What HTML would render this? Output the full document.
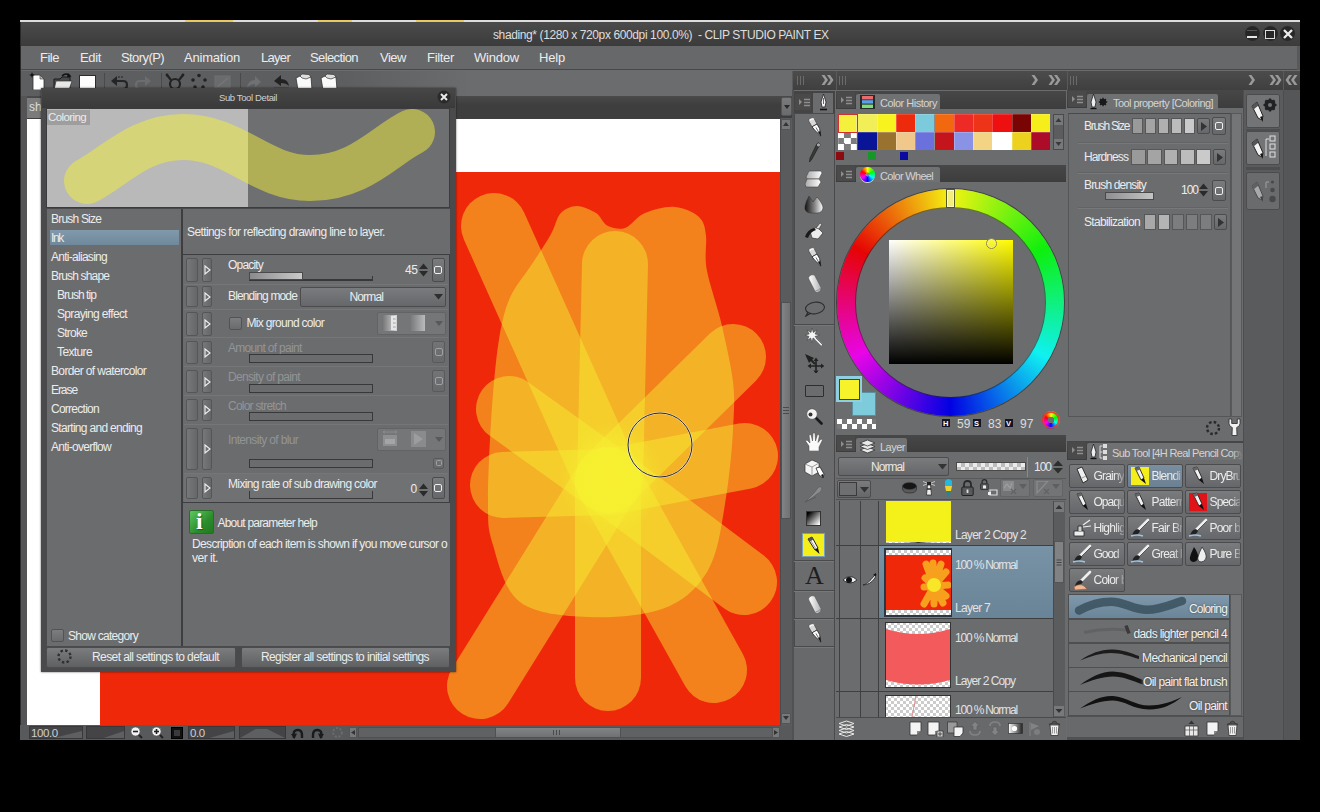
<!DOCTYPE html>
<html><head><meta charset="utf-8"><title>CLIP STUDIO PAINT EX</title>
<style>
*{box-sizing:border-box;margin:0;padding:0}
html,body{width:1320px;height:812px;background:#000;overflow:hidden}
body{font-family:"Liberation Sans",sans-serif;color:#e6e6e6;font-size:12px;position:relative}
.a{position:absolute}
.t{position:absolute;white-space:nowrap;line-height:1}
#win{left:20px;top:20px;width:1280px;height:720px;background:#6b6c6e;overflow:hidden}
#o{left:-20px;top:-20px;width:1320px;height:812px}
.btn{position:absolute;background:linear-gradient(#7a7b7d,#66676a);border:1px solid #4c4c4e;border-radius:2px}
.hdr{position:absolute;background:linear-gradient(#474747,#3d3d3d)}
.tab{position:absolute;background:#707173;border-radius:2px 2px 0 0}

</style></head><body>
<div id="win" class="a"><div id="o" class="a">
<div class="a" style="left:20px;top:20px;width:1280px;height:2px;background:#dcdcdc"></div>
<div class="a" style="left:185px;top:20px;width:48px;height:2px;background:#e8c860"></div>
<div class="a" style="left:318px;top:20px;width:34px;height:2px;background:#e8c860"></div>
<div class="a" style="left:416px;top:20px;width:48px;height:2px;background:#e8c860"></div>
<div class="a" style="left:20px;top:22px;width:1280px;height:24px;background:linear-gradient(#4b4b4b,#3b3b3b)"></div>
<div class="t" style="left:493px;top:29px;font-size:12px;color:#dedede;letter-spacing:-0.39px;">shading* (1280 x 720px 600dpi 100.0%)&nbsp; - CLIP STUDIO PAINT EX</div>
<div class="a" style="left:20px;top:46px;width:1280px;height:24px;background:#67686a;border-bottom:1px solid #48484a"></div>
<div class="t" style="left:40px;top:51px;font-size:13px;color:#ececec;letter-spacing:-0.49px;">File</div>
<div class="t" style="left:80px;top:51px;font-size:13px;color:#ececec;letter-spacing:-0.35px;">Edit</div>
<div class="t" style="left:121px;top:51px;font-size:13px;color:#ececec;letter-spacing:-0.58px;">Story(P)</div>
<div class="t" style="left:184px;top:51px;font-size:13px;color:#ececec;letter-spacing:-0.20px;">Animation</div>
<div class="t" style="left:261px;top:51px;font-size:13px;color:#ececec;letter-spacing:-0.70px;">Layer</div>
<div class="t" style="left:310px;top:51px;font-size:13px;color:#ececec;letter-spacing:-0.61px;">Selection</div>
<div class="t" style="left:380px;top:51px;font-size:13px;color:#ececec;letter-spacing:-0.49px;">View</div>
<div class="t" style="left:427px;top:51px;font-size:13px;color:#ececec;letter-spacing:-0.31px;">Filter</div>
<div class="t" style="left:474px;top:51px;font-size:13px;color:#ececec;letter-spacing:-0.21px;">Window</div>
<div class="t" style="left:539px;top:51px;font-size:13px;color:#ececec;letter-spacing:-0.18px;">Help</div>
<div class="a" style="left:20px;top:70px;width:1280px;height:26px;background:#6b6c6e"></div>
<div class="a" style="left:20px;top:71px;width:320px;height:25px;background:#5d5e60"></div>
<div class="a" style="left:340px;top:71px;width:130px;height:25px;background:linear-gradient(90deg,#5d5e60,#6b6c6e)"></div>
<svg class="a" style="left:29px;top:72px;opacity:1" width="18" height="18" viewBox="0 0 18 18"><path d="M4,3 L11,3 L15,7 L15,18 L4,18Z" fill="#fff" stroke="#333" stroke-width=".8"/><path d="M11,3 L11,7 L15,7Z" fill="#bbb" stroke="#333" stroke-width=".6"/><path d="M3,0 L3.8,2.2 L6,3 L3.8,3.8 L3,6 L2.2,3.8 L0,3 L2.2,2.2Z" fill="#111"/></svg>
<svg class="a" style="left:53px;top:73px;opacity:1" width="20" height="17" viewBox="0 0 20 17"><path d="M1,6 L7,6 L9,4 L17,4 L17,17 L1,17Z" fill="#4a4a4a" stroke="#1a1a1a"/><path d="M3,8 L19,8 L16,17 L1,17Z" fill="#e8e8e8" stroke="#333" stroke-width=".7"/><path d="M9,3 Q13,-1 17,3" stroke="#111" stroke-width="1.6" fill="none"/><path d="M15,0 L18.5,3.5 L14,4.5Z" fill="#111"/></svg>
<div class="a" style="left:79px;top:75px;width:17px;height:18px;background:#fdfdfd;border:1.5px solid #2c2c2c"></div>
<div class="a" style="left:104px;top:73px;width:1px;height:22px;background:#4a4a4c"></div>
<svg class="a" style="left:110px;top:75px;opacity:1" width="19" height="15" viewBox="0 0 19 15"><path d="M5,6 L13,6 Q17,6 17,10 Q17,14 13,14 L5,14" fill="none" stroke="#252525" stroke-width="2.2"/><path d="M7,1 L1,6 L7,11Z" fill="#252525"/><path d="M8,2h2M11,2h2" stroke="#252525" stroke-width="1"/></svg>
<svg class="a" style="left:134px;top:76px;opacity:1" width="18" height="14" viewBox="0 0 18 14"><path d="M13,5 L6,5 Q2,5 2,9 Q2,13 6,13 L13,13" fill="none" stroke="#6c6d6f" stroke-width="2.2"/><path d="M11,0 L17,5 L11,10Z" fill="#6c6d6f"/></svg>
<div class="a" style="left:161px;top:73px;width:1px;height:22px;background:#4a4a4c"></div>
<svg class="a" style="left:165px;top:73px;opacity:1" width="20" height="17" viewBox="0 0 20 17"><circle cx="10" cy="11" r="5" fill="none" stroke="#222" stroke-width="2.2"/><path d="M6,7 L2,2 M14,7 L18,2" stroke="#222" stroke-width="2.2"/><circle cx="2" cy="2" r="1.4" fill="#222"/><circle cx="18" cy="2" r="1.4" fill="#222"/></svg>
<svg class="a" style="left:190px;top:73px;opacity:1" width="18" height="17" viewBox="0 0 18 17"><g fill="#222"><circle cx="9" cy="2.5" r="1.8"/><circle cx="3" cy="7" r="1.8"/><circle cx="15" cy="7" r="1.8"/><circle cx="5" cy="14" r="1.8"/><circle cx="13" cy="14" r="1.8"/></g></svg>
<svg class="a" style="left:214px;top:75px;opacity:1" width="17" height="15" viewBox="0 0 17 15"><rect x="1" y="1" width="15" height="13" fill="#6a6b6d" stroke="#707173"/><path d="M3,12 L14,3" stroke="#757678" stroke-width="1.5"/></svg>
<div class="a" style="left:240px;top:73px;width:1px;height:22px;background:#4a4a4c"></div>
<svg class="a" style="left:245px;top:74px;opacity:1" width="17" height="15" viewBox="0 0 17 15"><path d="M2,14 Q3,6 10,6 L10,2 L16,8 L10,13 L10,10 Q5,10 2,14Z" fill="#707173"/></svg>
<svg class="a" style="left:272px;top:73px;opacity:1" width="19" height="17" viewBox="0 0 19 17"><path d="M17,13 Q16,6 9,6 L9,2 L2,8 L9,13 L9,10 Q14,10 17,13Z" fill="#222"/><path d="M2,15.5h15" stroke="#222" stroke-width="1.4"/></svg>
<svg class="a" style="left:294px;top:73px;opacity:1" width="20" height="17" viewBox="0 0 20 17"><path d="M2,5 L6,3 L17,4 L18,17 L4,17Z" fill="#fafafa" stroke="#333" stroke-width=".8"/><path d="M6,3 L8,1 L15,1.5 L17,4 L12,6 L8,5Z" fill="#ddd" stroke="#333" stroke-width=".7"/></svg>
<svg class="a" style="left:319px;top:73px;opacity:1" width="20" height="17" viewBox="0 0 20 17"><path d="M2,5 L6,3 L17,4 L18,17 L4,17Z" fill="#fafafa" stroke="#333" stroke-width=".8"/><path d="M6,3 L8,1 L15,1.5 L17,4 L12,6 L8,5Z" fill="#ddd" stroke="#333" stroke-width=".7"/></svg>
<div class="a" style="left:1244.5px;top:26px;width:15px;height:15px;border-radius:50%;background:radial-gradient(circle,#262626 60%,#333 100%)"></div>
<div class="a" style="left:1262.5px;top:26px;width:15px;height:15px;border-radius:50%;background:radial-gradient(circle,#262626 60%,#333 100%)"></div>
<div class="a" style="left:1280px;top:26px;width:15px;height:15px;border-radius:50%;background:radial-gradient(circle,#262626 60%,#333 100%)"></div>
<div class="a" style="left:1247px;top:35.5px;width:10px;height:2.5px;background:#e4e4e4"></div>
<div class="a" style="left:1247px;top:30px;width:10px;height:1px;background:#555"></div>
<div class="a" style="left:1265px;top:29.5px;width:10px;height:9.5px;border:1.7px solid #dcdcdc"></div>
<svg class="a" style="left:1283px;top:29px" width="10" height="10" viewBox="0 0 10 10"><path d="M1,1 L9,9 M9,1 L1,9" stroke="#ececec" stroke-width="2.3"/></svg>
<div class="a" style="left:1297px;top:46px;width:3px;height:694px;background:#58595b"></div>
<div class="a" style="left:20px;top:96px;width:772px;height:23px;background:linear-gradient(#4a4a4a,#3e3e3e 40%)"></div>
<div class="a" style="left:26px;top:98px;width:17px;height:20px;background:#7b7b7b"></div>
<div class="t" style="left:29px;top:101px;font-size:12px;color:#ddd;">sh</div>
<div class="a" style="left:20px;top:22px;width:1px;height:718px;background:#2a2a2a"></div>
<div class="a" style="left:21px;top:96px;width:6px;height:644px;background:#545456"></div>
<div class="a" style="left:27px;top:119px;width:753px;height:607px;background:#fff;overflow:hidden">
  <svg class="a" style="left:0;top:0" width="753" height="607" viewBox="27 119 753 607">
    <rect x="100" y="172" width="680" height="560" fill="#f0280a"/>
    <path fill="#f6f032" fill-opacity="0.45" d="M551,234 C556,225 556,219 560,214 C564,209 571,206 577,206 C583,206 591,210 596,213 C601,216 603,224 608,226 C613,228 619,230 625,228 C631,226 637,216 645,213 C653,210 666,206 675,207 C684,208 694,212 699,217 C704,222 705,227 706,236 C707,245 704,256 707,271 C710,286 718,308 722,326 C726,344 731,365 733,382 C735,399 734,410 733,430 C732,450 729,480 725,504 C721,528 718,554 707,572 C696,590 682,602 662,609 C642,616 612,618 588,617 C564,616 536,614 520,602 C504,590 498,562 493,545 C488,528 488,527 488,500 C488,473 491,414 494,382 C497,350 500,327 506,308 C512,289 522,279 530,267 C538,255 546,243 551,234Z"/>
    <g fill="none" stroke="#f6f032" stroke-opacity="0.45" stroke-width="66" stroke-linecap="round" stroke-linejoin="round">
      <path d="M494,226 L608,480"/>
      <path d="M615,264 L610,480"/>
      <path d="M733,357 L608,480"/>
      <path d="M509,409 L608,480"/>
      <path d="M503,485 L608,482 L745,456"/>
      <path d="M480,686 L608,480"/>
      <path d="M608,678 L608,480"/>
      <path d="M714,670 L608,480"/>
      <path d="M744,582 L608,480"/>
    </g>
    <defs><radialGradient id="glow"><stop offset="0" stop-color="#f8f030" stop-opacity=".75"/><stop offset=".5" stop-color="#f8f030" stop-opacity=".4"/><stop offset="1" stop-color="#f8f030" stop-opacity="0"/></radialGradient></defs>
    <ellipse cx="611" cy="478" rx="52" ry="56" fill="url(#glow)"/>
    <circle cx="660" cy="445" r="32" fill="none" stroke="#fff" stroke-opacity=".6" stroke-width="2"/>
    <circle cx="660" cy="445" r="32" fill="none" stroke="#223" stroke-width="1"/>
  </svg>
</div>
<div class="a" style="left:20px;top:725px;width:772px;height:15px;background:#58595b"></div>
<div class="a" style="left:29px;top:726px;width:54px;height:13px;background:#444446;border:1px solid #38383a;overflow:hidden"></div>
<svg class="a" style="left:30px;top:727px" width="52" height="11" viewBox="0 0 52 11"><path d="M23.4,11 L52,4 L52,11Z" fill="#5e5f61"/></svg>
<div class="t" style="left:31px;top:727.5px;font-size:11.5px;color:#cfcfcf;letter-spacing:-0.4px">100.0</div>
<div class="a" style="left:86px;top:726px;width:39px;height:13px;background:#444446;border:1px solid #38383a;overflow:hidden"></div>
<svg class="a" style="left:87px;top:727px" width="37" height="11" viewBox="0 0 37 11"><path d="M16.65,11 L37,4 L37,11Z" fill="#5e5f61"/></svg>
<svg class="a" style="left:130px;top:726px" width="13" height="13" viewBox="0 0 13 13"><path d="M8,8 L12,12" stroke="#222" stroke-width="2"/><circle cx="5.5" cy="5.5" r="4.6" fill="#f2f2f2" stroke="#555" stroke-width=".8"/><path d="M3,5.5h5" stroke="#222" stroke-width="1.6"/></svg>
<svg class="a" style="left:151px;top:726px" width="13" height="13" viewBox="0 0 13 13"><path d="M8,8 L12,12" stroke="#222" stroke-width="2"/><circle cx="5.5" cy="5.5" r="4.6" fill="#f2f2f2" stroke="#555" stroke-width=".8"/><path d="M3,5.5h5" stroke="#222" stroke-width="1.6"/><path d="M5.5,3v5" stroke="#222" stroke-width="1.6"/></svg>
<div class="a" style="left:171px;top:727px;width:12px;height:12px;background:#111;border:1px solid #000"></div>
<div class="a" style="left:174px;top:730px;width:6px;height:6px;background:#3a3a3a"></div>
<div class="a" style="left:188px;top:726px;width:47px;height:13px;background:#444446;border:1px solid #38383a;overflow:hidden"></div>
<svg class="a" style="left:189px;top:727px" width="45" height="11" viewBox="0 0 45 11"><path d="M20.25,11 L45,4 L45,11Z" fill="#5e5f61"/></svg>
<div class="t" style="left:190px;top:727.5px;font-size:11.5px;color:#cfcfcf;letter-spacing:-0.4px">0.0</div>
<div class="a" style="left:239px;top:726px;width:47px;height:13px;background:#444446;border:1px solid #38383a;overflow:hidden"></div>
<svg class="a" style="left:240px;top:727px" width="45" height="11" viewBox="0 0 45 11"><path d="M0,11 L15.75,2 L27,2 L45,11Z" fill="#5e5f61"/></svg>
<svg class="a" style="left:291px;top:727px" width="13" height="12" viewBox="0 0 13 12"><g><path d="M3,11 Q1,3 7,3 Q11,3 11,8 L11,11" fill="none" stroke="#1a1a1a" stroke-width="2.4"/><path d="M0,7 L3.5,12 L6,6.5Z" fill="#1a1a1a"/></g></svg>
<svg class="a" style="left:311px;top:727px" width="13" height="12" viewBox="0 0 13 12"><g transform="translate(13,0) scale(-1,1)"><path d="M3,11 Q1,3 7,3 Q11,3 11,8 L11,11" fill="none" stroke="#1a1a1a" stroke-width="2.4"/><path d="M0,7 L3.5,12 L6,6.5Z" fill="#1a1a1a"/></g></svg>
<svg class="a" style="left:331px;top:726px" width="13" height="13" viewBox="0 0 13 13"><circle cx="6.5" cy="6.5" r="4.4" fill="none" stroke="#6a6b6d" stroke-width="2" stroke-dasharray="2.2 1.5"/></svg>
<div class="a" style="left:349px;top:727px;width:8px;height:11px;background:#77787a;border:1px solid #555"></div>
<svg class="a" style="left:351px;top:730px" width="4" height="5" viewBox="0 0 4 5"><path d="M4,0 L0,2.5 L4,5Z" fill="#333"/></svg>
<div class="a" style="left:358px;top:727px;width:415px;height:11px;background:#606163;border:1px solid #4e4f51"></div>
<div class="a" style="left:495px;top:727px;width:126px;height:11px;background:linear-gradient(#828385,#707173);border:1px solid #505153"></div>
<div class="a" style="left:553px;top:730px;width:7px;height:5px;background:repeating-linear-gradient(90deg,#4a4a4c 0 1px,transparent 1px 3px)"></div>
<div class="a" style="left:772px;top:727px;width:8px;height:11px;background:#77787a;border:1px solid #555"></div>
<svg class="a" style="left:774px;top:730px" width="4" height="5" viewBox="0 0 4 5"><path d="M0,0 L4,2.5 L0,5Z" fill="#333"/></svg>
<div class="a" style="left:780px;top:118px;width:12px;height:608px;background:#5a5b5d;border-left:1px solid #4a4a4c"></div>
<div class="a" style="left:781px;top:119px;width:10px;height:11px;background:#77787a;border:1px solid #555"></div>
<div class="a" style="left:781px;top:713px;width:10px;height:11px;background:#77787a;border:1px solid #555"></div>
<svg class="a" style="left:783px;top:122px" width="6" height="600" viewBox="0 0 6 600"><path d="M0,4 L3,0 L6,4Z M0,594 L3,598 L6,594Z" fill="#333"/></svg>
<div class="a" style="left:781px;top:302px;width:10px;height:217px;background:linear-gradient(90deg,#828385,#707173);border:1px solid #505153"></div>
<div class="a" style="left:783px;top:407px;width:6px;height:7px;background:repeating-linear-gradient(#4a4a4c 0 1px,transparent 1px 3px)"></div>
<div class="a" style="left:781px;top:97px;width:11px;height:19px;background:linear-gradient(#7a7b7d,#6a6b6d);border:1px solid #555;border-radius:2px"></div>
<svg class="a" style="left:783.5px;top:105px" width="6" height="4" viewBox="0 0 6 4"><path d="M0,0 L6,0 L3,4Z" fill="#2a2a2a"/></svg>
<div class="a" style="left:792px;top:70px;width:508px;height:670px;background:#6b6c6e"></div>
<div class="a" style="left:792px;top:71px;width:44px;height:19px;background:linear-gradient(#4c4c4c,#3f3f3f);border-left:1px solid #5a5a5a"></div>
<div class="a" style="left:836px;top:71px;width:231px;height:19px;background:linear-gradient(#4c4c4c,#3f3f3f);border-left:1px solid #5a5a5a"></div>
<div class="a" style="left:1067px;top:71px;width:216px;height:19px;background:linear-gradient(#4c4c4c,#3f3f3f);border-left:1px solid #5a5a5a"></div>
<div class="a" style="left:1283px;top:71px;width:17px;height:19px;background:linear-gradient(#4c4c4c,#3f3f3f);border-left:1px solid #5a5a5a"></div>
<div class="a" style="left:797px;top:76px;width:7px;height:9px;background:repeating-linear-gradient(90deg,#6a6a6a 0 1px,transparent 1px 3px)"></div>
<div class="a" style="left:839px;top:76px;width:7px;height:9px;background:repeating-linear-gradient(90deg,#6a6a6a 0 1px,transparent 1px 3px)"></div>
<div class="a" style="left:1070px;top:76px;width:7px;height:9px;background:repeating-linear-gradient(90deg,#6a6a6a 0 1px,transparent 1px 3px)"></div>
<svg class="a" style="left:821px;top:74px" width="13" height="12" viewBox="0 0 13 12"><g fill="#9a9a9a"><path d="M0.5,1 L4,6 L0.5,11 L3.5,11 L7,6 L3.5,1Z"/><path d="M6,1 L9.5,6 L6,11 L9,11 L12.5,6 L9,1Z"/></g></svg>
<svg class="a" style="left:1031px;top:74px" width="13" height="12" viewBox="0 0 13 12"><g fill="#9a9a9a"><path d="M0.5,1 L4,6 L0.5,11 L3.5,11 L7,6 L3.5,1Z"/></g></svg>
<svg class="a" style="left:1048px;top:74px" width="13" height="12" viewBox="0 0 13 12"><g fill="#9a9a9a"><path d="M0.5,1 L4,6 L0.5,11 L3.5,11 L7,6 L3.5,1Z"/><path d="M6,1 L9.5,6 L6,11 L9,11 L12.5,6 L9,1Z"/></g></svg>
<svg class="a" style="left:1248px;top:74px" width="13" height="12" viewBox="0 0 13 12"><g fill="#9a9a9a"><path d="M0.5,1 L4,6 L0.5,11 L3.5,11 L7,6 L3.5,1Z"/></g></svg>
<svg class="a" style="left:1269px;top:74px" width="13" height="12" viewBox="0 0 13 12"><g fill="#9a9a9a"><path d="M0.5,1 L4,6 L0.5,11 L3.5,11 L7,6 L3.5,1Z"/><path d="M6,1 L9.5,6 L6,11 L9,11 L12.5,6 L9,1Z"/></g></svg>
<svg class="a" style="left:1285px;top:74px" width="13" height="12" viewBox="0 0 13 12"><g fill="#9a9a9a" transform="translate(13,0) scale(-1,1)"><path d="M0.5,1 L4,6 L0.5,11 L3.5,11 L7,6 L3.5,1Z"/><path d="M6,1 L9.5,6 L6,11 L9,11 L12.5,6 L9,1Z"/></g></svg>
<div class="a" style="left:793px;top:91px;width:42px;height:22px;background:#444"></div>
<div class="a" style="left:795px;top:94px;width:16px;height:16px;background:#4a4a4a"></div>
<svg class="a" style="left:799px;top:98px" width="12" height="10" viewBox="0 0 12 10"><path d="M0,1 L3,4 L0,7Z" fill="#8e8e8e"/><path d="M5,1.5h6M5,4.5h6M5,7.5h6" stroke="#8e8e8e" stroke-width="1.3"/></svg>
<div class="a" style="left:813px;top:93px;width:20px;height:20px;background:#6b6c6e"></div>
<div class="a" style="left:794px;top:113px;width:41px;height:627px;background:#6b6c6e;border:1px solid #4a4a4c"></div>
<div class="a" style="left:792px;top:90px;width:2px;height:650px;background:#505153"></div>
<div class="a" style="left:794px;top:324px;width:40px;height:1px;background:#4a4a4c"></div>
<div class="a" style="left:794px;top:325px;width:40px;height:1px;background:#77787a"></div>
<div class="a" style="left:794px;top:560px;width:40px;height:1px;background:#4a4a4c"></div>
<div class="a" style="left:794px;top:561px;width:40px;height:1px;background:#77787a"></div>
<div class="a" style="left:794px;top:590px;width:40px;height:1px;background:#4a4a4c"></div>
<div class="a" style="left:794px;top:591px;width:40px;height:1px;background:#77787a"></div>
<div class="a" style="left:794px;top:618px;width:40px;height:1px;background:#4a4a4c"></div>
<div class="a" style="left:794px;top:619px;width:40px;height:1px;background:#77787a"></div>
<div class="a" style="left:794px;top:646px;width:40px;height:1px;background:#4a4a4c"></div>
<div class="a" style="left:794px;top:647px;width:40px;height:1px;background:#77787a"></div>
<div class="a" style="left:794px;top:648px;width:40px;height:92px;background:#68696b"></div>
<svg class="a" style="left:818px;top:93px;opacity:1" width="11" height="19" viewBox="0 0 11 19"><path d="M5.5,1 L8,9 L7,14 L4,14 L3,9Z" fill="#f4f4f4" stroke="#222" stroke-width=".8"/><path d="M5.5,5v6" stroke="#444" stroke-width=".8"/><path d="M2,16.5h7" stroke="#111" stroke-width="1.6"/></svg>
<svg class="a" style="left:807px;top:117px;opacity:1" width="15" height="20" viewBox="0 0 15 20"><path d="M3,1.2 Q5.5,-0.3 7.3,1.8 L10,7 L5,9.8 L2,4.5 Q1.3,2.3 3,1.2Z" fill="#d8d8d8" stroke="#444" stroke-width=".7"/><path d="M2.6,3.5 Q4.5,1.5 7,2.2" stroke="#fff" stroke-width="1.2" fill="none"/><path d="M5,9.8 L10,7 L12.6,11.5 L13.8,19 L8,13.5Z" fill="#fafafa" stroke="#222" stroke-width=".8"/><path d="M9,10.5 L12.6,17" stroke="#444" stroke-width=".8"/><path d="M11.2,15 L14,19.6 L13.2,14Z" fill="#111"/></svg>
<svg class="a" style="left:807px;top:142px;opacity:1" width="14" height="21" viewBox="0 0 14 21"><path d="M10,1.5 Q12,0 13,2 Q13.5,4 11.5,5 L5,17 L2.5,20 L3,16Z" fill="#3a3a3a" stroke="#1a1a1a" stroke-width=".6"/><circle cx="11.5" cy="2.8" r="1.6" fill="#aaa"/></svg>
<svg class="a" style="left:804px;top:170px;opacity:1" width="19" height="18" viewBox="0 0 19 18"><defs><linearGradient id="g3" x1="0" x2="1"><stop offset="0" stop-color="#aaa"/><stop offset="1" stop-color="#fff"/></linearGradient></defs><path d="M5,1 L17,1 L18,3 L15,9 L3,9 L2,7Z" fill="url(#g3)" stroke="#444" stroke-width=".6"/><path d="M3,9 L15,9 L17,12 L14,17 L2,17 L1,14Z" fill="url(#g3)" stroke="#444" stroke-width=".6"/></svg>
<svg class="a" style="left:804px;top:195px;opacity:1" width="20" height="19" viewBox="0 0 20 19"><defs><linearGradient id="g4" x1="0" x2="1"><stop offset="0" stop-color="#111"/><stop offset=".55" stop-color="#888"/><stop offset="1" stop-color="#fff"/></linearGradient></defs><path d="M5,1 L9,7 L13,2 Q19,9 19,13 Q18,18 13,18 L6,18 Q0,17 1,11 Q2,6 5,1Z" fill="url(#g4)" stroke="#333" stroke-width=".5"/></svg>
<svg class="a" style="left:804px;top:222px;opacity:1" width="20" height="19" viewBox="0 0 20 19"><path d="M6,9 L13,5 L19,11 L14,17 L8,16Z" fill="#ececec" stroke="#333" stroke-width=".7"/><path d="M1,15 Q3,8 10,6 L12,8 Q6,10 4,16Z" fill="#1a1a1a"/><path d="M12,6 L16,1 L18,2 L15,7Z" fill="#ddd" stroke="#333" stroke-width=".6"/></svg>
<svg class="a" style="left:807px;top:247px;opacity:1" width="15" height="20" viewBox="0 0 15 20"><path d="M3,1.2 Q5.5,-0.3 7.3,1.8 L10,7 L5,9.8 L2,4.5 Q1.3,2.3 3,1.2Z" fill="#d8d8d8" stroke="#444" stroke-width=".7"/><path d="M2.6,3.5 Q4.5,1.5 7,2.2" stroke="#fff" stroke-width="1.2" fill="none"/><path d="M5,9.8 L10,7 L12.6,11.5 L13.8,19 L8,13.5Z" fill="#fafafa" stroke="#222" stroke-width=".8"/><path d="M9,10.5 L12.6,17" stroke="#444" stroke-width=".8"/><path d="M11.2,15 L14,19.6 L13.2,14Z" fill="#111"/></svg>
<svg class="a" style="left:807px;top:274px;opacity:1" width="15" height="19" viewBox="0 0 15 19"><defs><linearGradient id="g7" x1="0" x2="1"><stop offset="0" stop-color="#fff"/><stop offset="1" stop-color="#b4b4b4"/></linearGradient></defs><path d="M2.5,2 Q4.5,0 7.5,1 L14,13.5 Q14.5,17 11,18.3 Q9,18.8 8,17.3 L1.8,5 Q1.2,3.2 2.5,2Z" fill="url(#g7)" stroke="#555" stroke-width=".6"/><path d="M8.5,17 Q12.5,16.5 13.8,13.5" stroke="#8a8a8a" stroke-width=".9" fill="none"/></svg>
<svg class="a" style="left:804px;top:301px;opacity:1" width="21" height="16" viewBox="0 0 21 16"><ellipse cx="11" cy="7" rx="9.5" ry="5.8" fill="none" stroke="#2e2e2e" stroke-width="1.1" transform="rotate(-8 11 7)"/><path d="M4,11 L2,15 L7,12" fill="none" stroke="#2a2a2a" stroke-width="1.2"/></svg>
<svg class="a" style="left:805px;top:328px;opacity:1" width="19" height="19" viewBox="0 0 19 19"><path d="M7,0 L8.3,4.5 L12,2 L10,6 L14.5,7 L10,8.5 L12,12.5 L8,10 L7,14.5 L5.7,10 L2,12.5 L4,8.5 L0,7 L4.2,6 L2,2 L6,4.5Z" fill="#f4f4f4" stroke="#333" stroke-width=".5"/><path d="M10,10 L17,17" stroke="#eee" stroke-width="2"/><path d="M11,10 L18,17" stroke="#444" stroke-width=".7"/></svg>
<svg class="a" style="left:804px;top:353px;opacity:1" width="20" height="20" viewBox="0 0 20 20"><path d="M1,1 L10,5 L5,10Z" fill="#222"/><path d="M3,3 L11,11" stroke="#222" stroke-width="2"/><path d="M12,6 L12,20 M5,13 L19,13" stroke="#222" stroke-width="1.6"/><path d="M12,4.5 L14.5,8 L9.5,8Z M12,21 L14.5,17.5 L9.5,17.5Z M3.5,13 L7,10.5 L7,15.5Z M20.5,13 L17,10.5 L17,15.5Z" fill="#222"/></svg>
<div class="a" style="left:805px;top:385px;width:19px;height:12px;border:1.6px solid #2e2e2e;border-radius:1px"></div>
<svg class="a" style="left:806px;top:408px;opacity:1" width="17" height="17" viewBox="0 0 17 17"><path d="M9,9 L15.5,15.5" stroke="#1a1a1a" stroke-width="2.6" stroke-linecap="round"/><circle cx="6" cy="6" r="5.3" fill="#f4f4f4" stroke="#555" stroke-width=".7"/><circle cx="4.5" cy="6.5" r="2" fill="#333"/></svg>
<svg class="a" style="left:805px;top:432px;opacity:1" width="18" height="19" viewBox="0 0 18 19"><path d="M4,19 L4,14 L0.5,9 L2,8 L5,11 L4,3 L6,2.5 L7.5,9 L8,1 L10,1 L10.5,9 L12.5,2.5 L14.5,3 L13,10.5 L16,7 L17.5,8 L14,15 L14,19Z" fill="#fafafa" stroke="#444" stroke-width=".5"/></svg>
<svg class="a" style="left:804px;top:459px;opacity:1" width="21" height="19" viewBox="0 0 21 19"><path d="M1,5 L8,1 L15,4 L15,13 L8,17 L1,13Z" fill="#f4f4f4" stroke="#333" stroke-width=".7"/><path d="M1,5 L8,8 L15,4 M8,8 L8,17" fill="none" stroke="#777" stroke-width=".7"/><path d="M12,9 L16,8 L20,15 L19,19 L15,16Z" fill="#fff" stroke="#222" stroke-width=".8"/><path d="M17,16 L19.5,19.5 L19,15Z" fill="#111"/></svg>
<svg class="a" style="left:804px;top:485px;opacity:0.9" width="19" height="18" viewBox="0 0 19 18"><path d="M1,17 L10,8 L13,4 Q16,0 18,3 Q18,7 13,9 L8,13Z" fill="#8e8f91" stroke="#555" stroke-width=".6"/><path d="M1,17 L12,12" stroke="#555" stroke-width=".8"/></svg>
<div class="a" style="left:806px;top:511px;width:15px;height:15px;background:linear-gradient(135deg,#000 10%,#fff 95%);border:1px solid #333"></div>
<div class="a" style="left:802px;top:533px;width:23px;height:24px;background:#f4ee1a;border:1.5px solid #7aa0b8"></div>
<svg class="a" style="left:806px;top:536px;opacity:1" width="15" height="19" viewBox="0 0 15 19"><path d="M2,3 L6,1 L12,12 L9,14Z" fill="#f8f8f8" stroke="#222" stroke-width="1"/><path d="M9,14 L12,12 L13.5,18Z" fill="#111"/><path d="M2,3 L6,1 L7.4,3.6 L3.5,5.8Z" fill="#555"/><path d="M5,5 L10,13" stroke="#777" stroke-width=".7"/></svg>
<div class="t" style="left:805px;top:563px;font-family:'Liberation Serif',serif;font-size:26px;color:#1e1e1e">A</div>
<svg class="a" style="left:807px;top:595px;opacity:1" width="15" height="19" viewBox="0 0 15 19"><defs><linearGradient id="g7b" x1="0" x2="1"><stop offset="0" stop-color="#fff"/><stop offset="1" stop-color="#b4b4b4"/></linearGradient></defs><path d="M2.5,2 Q4.5,0 7.5,1 L14,13.5 Q14.5,17 11,18.3 Q9,18.8 8,17.3 L1.8,5 Q1.2,3.2 2.5,2Z" fill="url(#g7b)" stroke="#555" stroke-width=".6"/><path d="M8.5,17 Q12.5,16.5 13.8,13.5" stroke="#8a8a8a" stroke-width=".9" fill="none"/></svg>
<svg class="a" style="left:807px;top:623px;opacity:1" width="15" height="20" viewBox="0 0 15 20"><path d="M3,1.2 Q5.5,-0.3 7.3,1.8 L10,7 L5,9.8 L2,4.5 Q1.3,2.3 3,1.2Z" fill="#d8d8d8" stroke="#444" stroke-width=".7"/><path d="M2.6,3.5 Q4.5,1.5 7,2.2" stroke="#fff" stroke-width="1.2" fill="none"/><path d="M5,9.8 L10,7 L12.6,11.5 L13.8,19 L8,13.5Z" fill="#fafafa" stroke="#222" stroke-width=".8"/><path d="M9,10.5 L12.6,17" stroke="#444" stroke-width=".8"/><path d="M11.2,15 L14,19.6 L13.2,14Z" fill="#111"/></svg>
<div class="hdr" style="left:836px;top:91px;width:230px;height:18px;"></div>
<div class="a" style="left:837px;top:92px;width:18px;height:16px;background:#4a4a4a"></div>
<svg class="a" style="left:841px;top:96px" width="12" height="10" viewBox="0 0 12 10"><path d="M0,1 L3,4 L0,7Z" fill="#8e8e8e"/><path d="M5,1.5h6M5,4.5h6M5,7.5h6" stroke="#8e8e8e" stroke-width="1.3"/></svg>
<div class="tab" style="left:856px;top:94px;width:84px;height:15px;"></div>
<svg class="a" style="left:860px;top:95px" width="15" height="14" viewBox="0 0 15 14"><rect width="15" height="14" fill="#2a2a2a"/><rect x="2" y="1" width="11" height="3.4" fill="#e86a6a"/><rect x="2" y="5.2" width="11" height="3.4" fill="#5aa0e8"/><rect x="2" y="9.6" width="11" height="3.4" fill="#7be07b"/></svg>
<div class="t" style="left:880px;top:97.5px;font-size:11px;color:#d4d4d4;letter-spacing:-0.51px;">Color History</div>
<div class="a" style="left:838px;top:114px;width:19.3px;height:18px;background:#f5f03c"></div>
<div class="a" style="left:857.3px;top:114px;width:19.3px;height:18px;background:#f2ee58"></div>
<div class="a" style="left:876.6px;top:114px;width:19.3px;height:18px;background:#f8f21e"></div>
<div class="a" style="left:895.9px;top:114px;width:19.3px;height:18px;background:#ee2a0c"></div>
<div class="a" style="left:915.2px;top:114px;width:19.3px;height:18px;background:#7ccbdc"></div>
<div class="a" style="left:934.5px;top:114px;width:19.3px;height:18px;background:#f2680e"></div>
<div class="a" style="left:953.8px;top:114px;width:19.3px;height:18px;background:#ee2a26"></div>
<div class="a" style="left:973.1px;top:114px;width:19.3px;height:18px;background:#ee3418"></div>
<div class="a" style="left:992.4px;top:114px;width:19.3px;height:18px;background:#ee1010"></div>
<div class="a" style="left:1011.7px;top:114px;width:19.3px;height:18px;background:#780404"></div>
<div class="a" style="left:1031px;top:114px;width:19.3px;height:18px;background:#f6ee1a"></div>
<div class="a" style="left:838px;top:132px;width:19.3px;height:18px;background:#fff conic-gradient(#7c7c7c 25%,#fff 0 50%,#7c7c7c 0 75%,#fff 0) 0 0/12.87px 12px"></div>
<div class="a" style="left:857.3px;top:132px;width:19.3px;height:18px;background:#0a1496"></div>
<div class="a" style="left:876.6px;top:132px;width:19.3px;height:18px;background:#9a7230"></div>
<div class="a" style="left:895.9px;top:132px;width:19.3px;height:18px;background:#f0c88c"></div>
<div class="a" style="left:915.2px;top:132px;width:19.3px;height:18px;background:#6a70dc"></div>
<div class="a" style="left:934.5px;top:132px;width:19.3px;height:18px;background:#c4141c"></div>
<div class="a" style="left:953.8px;top:132px;width:19.3px;height:18px;background:#8a92e6"></div>
<div class="a" style="left:973.1px;top:132px;width:19.3px;height:18px;background:#f2d484"></div>
<div class="a" style="left:992.4px;top:132px;width:19.3px;height:18px;background:#ffffff"></div>
<div class="a" style="left:1011.7px;top:132px;width:19.3px;height:18px;background:#ecd21e"></div>
<div class="a" style="left:1031px;top:132px;width:19.3px;height:18px;background:#ac0c28"></div>
<div class="a" style="left:838px;top:114px;width:212.3px;height:36px;background:repeating-linear-gradient(90deg,rgba(255,255,255,.22) 0 1px,transparent 1px 19.3px);border-top:1px solid rgba(255,255,255,.15)"></div>
<div class="a" style="left:838px;top:131.5px;width:212.3px;height:1px;background:rgba(255,255,255,.2)"></div>
<div class="a" style="left:837.5px;top:113.5px;width:20.5px;height:19px;border:1px solid #d03030;box-shadow:inset 0 0 0 1px #f4e8a0"></div>
<div class="a" style="left:836px;top:152px;width:8px;height:8px;background:#8c0a10"></div>
<div class="a" style="left:868px;top:152px;width:8px;height:8px;background:#18962a"></div>
<div class="a" style="left:900px;top:152px;width:8px;height:8px;background:#0a0aa0"></div>
<div class="a" style="left:1052.5px;top:114px;width:11px;height:36px;background:#5c5c5e;border:1px solid #4a4a4a"></div>
<div class="a" style="left:1053.5px;top:115px;width:9px;height:10px;background:#77787a"></div>
<div class="a" style="left:1053.5px;top:139px;width:9px;height:10px;background:#77787a"></div>
<svg class="a" style="left:1054.5px;top:117px" width="7" height="30" viewBox="0 0 7 30"><path d="M0.5,5 L3.5,1 L6.5,5Z M0.5,25 L3.5,29 L6.5,25Z" fill="#3a3a3a"/></svg>
<div class="hdr" style="left:836px;top:165px;width:230px;height:17px;"></div>
<div class="a" style="left:837px;top:166px;width:18px;height:15px;background:#4a4a4a"></div>
<svg class="a" style="left:841px;top:170px" width="12" height="10" viewBox="0 0 12 10"><path d="M0,1 L3,4 L0,7Z" fill="#8e8e8e"/><path d="M5,1.5h6M5,4.5h6M5,7.5h6" stroke="#8e8e8e" stroke-width="1.3"/></svg>
<div class="tab" style="left:856px;top:167px;width:84px;height:15px;"></div>
<div class="a" style="left:860px;top:167px;width:15px;height:15px;border-radius:50%;background:radial-gradient(circle,#888 0 18%,transparent 20%),conic-gradient(from -60deg,#f00,#ff0,#0f0,#0ff,#00f,#f0f,#f00);box-shadow:0 1px 0 #ddd"></div>
<div class="t" style="left:880px;top:170.5px;font-size:11px;color:#d4d4d4;letter-spacing:-0.68px;">Color Wheel</div>
<div class="a" style="left:837px;top:189px;width:227px;height:227px;border-radius:50%;background:conic-gradient(from -60deg,#f00,#ff0,#0f0,#0ff,#00f,#f0f,#f00);box-shadow:0 0 0 1px rgba(40,40,40,.6);filter:saturate(.92) brightness(.96)"></div>
<div class="a" style="left:856px;top:208px;width:189px;height:189px;border-radius:50%;background:#6b6c6e;box-shadow:0 0 0 1px rgba(40,40,40,.6)"></div>
<div class="a" style="left:889px;top:240px;width:124px;height:124px;background:linear-gradient(to top,#000,rgba(0,0,0,0)),linear-gradient(to right,#fff,#fffb00)"></div>
<div class="a" style="left:946px;top:189px;width:9px;height:19px;background:#f2ee7a;border:1px solid #55552a;box-shadow:inset 0 0 0 1px #fbf8c0"></div>
<div class="a" style="left:986px;top:238px;width:11px;height:11px;border-radius:50%;border:1px solid #8a8a50;box-shadow:inset 0 0 0 1px #f6f2b0"></div>
<div class="a" style="left:852px;top:392px;width:24px;height:24px;background:#7ecbdc;border:1px solid #58929e"></div>
<div class="a" style="left:836px;top:376px;width:26px;height:26px;background:#8fcfe4"></div>
<div class="a" style="left:839px;top:379px;width:21px;height:21px;background:#f8f22a;border:1px solid #44441e"></div>
<div class="a" style="left:837px;top:419px;width:39px;height:10px;background:#fff conic-gradient(#777 25%,#fff 0 50%,#777 0 75%,#fff 0) 0 0/10px 10px"></div>
<div class="a" style="left:942px;top:419px;width:8px;height:8px;background:#141428"></div>
<div class="t" style="left:943px;top:419.5px;font-size:7.5px;color:#fff;font-weight:bold">H</div>
<div class="t" style="left:957px;top:418px;font-size:12px;color:#dcdcdc;">59</div>
<div class="a" style="left:973px;top:419px;width:8px;height:8px;background:#141428"></div>
<div class="t" style="left:974px;top:419.5px;font-size:7.5px;color:#fff;font-weight:bold">S</div>
<div class="t" style="left:988px;top:418px;font-size:12px;color:#dcdcdc;">83</div>
<div class="a" style="left:1005px;top:419px;width:8px;height:8px;background:#141428"></div>
<div class="t" style="left:1006px;top:419.5px;font-size:7.5px;color:#fff;font-weight:bold">V</div>
<div class="t" style="left:1020px;top:418px;font-size:12px;color:#dcdcdc;">97</div>
<div class="a" style="left:1042px;top:411px;width:18px;height:18px;border-radius:50%;background:radial-gradient(circle,#6b6c6e 0 25%,transparent 27%),conic-gradient(from -60deg,#f00,#ff0,#0f0,#0ff,#00f,#f0f,#f00);box-shadow:inset 0 0 0 2px rgba(230,60,40,.9)"></div>
<div class="hdr" style="left:836px;top:435px;width:230px;height:17px;"></div>
<div class="a" style="left:837px;top:436px;width:18px;height:15px;background:#4a4a4a"></div>
<svg class="a" style="left:841px;top:440px" width="12" height="10" viewBox="0 0 12 10"><path d="M0,1 L3,4 L0,7Z" fill="#8e8e8e"/><path d="M5,1.5h6M5,4.5h6M5,7.5h6" stroke="#8e8e8e" stroke-width="1.3"/></svg>
<div class="tab" style="left:856px;top:438px;width:51px;height:14px;"></div>
<svg class="a" style="left:859px;top:438px" width="17" height="16" viewBox="0 0 17 16"><g fill="#e8e8e8" stroke="#333" stroke-width=".8"><path d="M1,12 L8.5,9 L16,12 L8.5,15Z"/><path d="M1,8.5 L8.5,5.5 L16,8.5 L8.5,11.5Z"/><path d="M1,5 L8.5,2 L16,5 L8.5,8Z"/></g></svg>
<div class="t" style="left:880px;top:441.5px;font-size:11px;color:#d4d4d4;letter-spacing:-0.50px;">Layer</div>
<div class="btn" style="left:838px;top:457px;width:111px;height:19px;"></div>
<div class="t" style="left:871px;top:461px;font-size:12px;color:#e8e8e8;letter-spacing:-0.95px;">Normal</div>
<svg class="a" style="left:938px;top:464px" width="9" height="6" viewBox="0 0 9 6"><path d="M0,0 L9,0 L4.5,5.5Z" fill="#333"/></svg>
<div class="a" style="left:956px;top:462px;width:70px;height:9px;background:#e4e4e4 conic-gradient(#bdbdbd 25%,#ececec 0 50%,#bdbdbd 0 75%,#ececec 0) 0 0/8px 8px;border:1px solid #4a4a4a"></div>
<div class="a" style="left:1027px;top:457px;width:1px;height:20px;background:#88898b"></div>
<div class="t" style="left:1034px;top:461px;font-size:12px;color:#e8e8e8;letter-spacing:-1.01px;">100</div>
<svg class="a" style="left:1053px;top:460px" width="10" height="14" viewBox="0 0 10 14"><path d="M0,6 L5,0.5 L10,6Z M0,8 L5,13.5 L10,8Z" fill="#2e2e2e"/></svg>
<div class="a" style="left:836px;top:478px;width:230px;height:1px;background:#58595b"></div>
<div class="btn" style="left:837px;top:480px;width:34px;height:18px;"></div>
<div class="a" style="left:839px;top:482px;width:18px;height:14px;background:#6e6f71;border:1px solid #3a3a3a"></div>
<svg class="a" style="left:860px;top:487px" width="9" height="6" viewBox="0 0 9 6"><path d="M0,0 L9,0 L4.5,5.5Z" fill="#333"/></svg>
<svg class="a" style="left:902px;top:481px;opacity:1" width="15" height="13" viewBox="0 0 15 13"><path d="M0.5,5 L0.5,8 Q1,12 7.5,12 Q14,12 14.5,8 L14.5,5Z" fill="#5a5a5c" stroke="#2a2a2a" stroke-width=".7"/><ellipse cx="7.5" cy="5" rx="7" ry="3.6" fill="#161616" stroke="#444" stroke-width=".6"/></svg>
<svg class="a" style="left:923px;top:480px;opacity:1" width="12" height="16" viewBox="0 0 12 16"><path d="M4.5,5 L7.5,5 L8.5,15 L3.5,15Z" fill="#eee" stroke="#222" stroke-width=".7"/><rect x="4" y="2" width="4" height="3" fill="#222"/><path d="M4,9h4" stroke="#222" stroke-width="1.4"/><path d="M4,3 L0,1.5 M4,4 L0,5.5 M8,3 L12,1.5 M8,4 L12,5.5" stroke="#ddd" stroke-width=".8"/></svg>
<svg class="a" style="left:944px;top:478px;opacity:1" width="9" height="19" viewBox="0 0 9 19"><path d="M1,3 Q4.5,-1 8,3 L8,8 L1,8Z" fill="#22b8e0"/><path d="M1,8 L8,8 L7,13 L2,13Z" fill="#f0d030"/><path d="M2,13 L7,13 L4.5,19Z" fill="#1a8a9a"/></svg>
<svg class="a" style="left:961px;top:480px;opacity:1" width="13" height="16" viewBox="0 0 13 16"><path d="M3,7 L3,4.5 Q3,1 6.5,1 Q10,1 10,4.5 L10,7" fill="none" stroke="#2a2a2a" stroke-width="1.8"/><rect x="0.8" y="7" width="11.4" height="8.5" rx="1" fill="#58595b" stroke="#222" stroke-width="1"/><rect x="5.6" y="9.5" width="1.8" height="3.5" fill="#ddd"/></svg>
<svg class="a" style="left:980px;top:479px;opacity:1" width="18" height="17" viewBox="0 0 18 17"><g transform="scale(.68)"><path d="M3,7 L3,4.5 Q3,1 6.5,1 Q10,1 10,4.5 L10,7" fill="none" stroke="#2a2a2a" stroke-width="1.8"/><rect x="0.8" y="7" width="11.4" height="8.5" rx="1" fill="#58595b" stroke="#222" stroke-width="1"/><rect x="5.6" y="9.5" width="1.8" height="3.5" fill="#ddd"/></g><rect x="3" y="6.5" width="3" height="3" fill="#eee"/><path d="M10,11 h7 v5 h-7Z" fill="none" stroke="#ddd" stroke-width="1.2"/><rect x="8" y="13" width="3" height="3" fill="#eee"/></svg>
<div class="a" style="left:1000px;top:479px;width:30px;height:18px;background:#737476;border:1px solid #636466;border-radius:2px"></div>
<div class="a" style="left:1033px;top:479px;width:30px;height:18px;background:#737476;border:1px solid #636466;border-radius:2px"></div>
<svg class="a" style="left:1003px;top:481px;opacity:1" width="26" height="14" viewBox="0 0 26 14"><rect x="0" y="0" width="11" height="10" fill="#8a8b8d"/><path d="M1,7 L4,3 L7,7 L9,2" stroke="#9c9d9f" stroke-width="1.3" fill="none"/><path d="M8,8 L13,13 M13,8 L8,13" stroke="#626365" stroke-width="1.2"/><path d="M16,3 L24,3 L20,8Z" fill="#5e5f61"/></svg>
<svg class="a" style="left:1036px;top:481px;opacity:1" width="26" height="14" viewBox="0 0 26 14"><path d="M1,0 L12,0 L1,12Z" fill="none" stroke="#8a8b8d" stroke-width="1.3"/><path d="M8,8 L13,13 M13,8 L8,13" stroke="#626365" stroke-width="1.2"/><path d="M16,3 L24,3 L20,8Z" fill="#5e5f61"/></svg>
<div class="a" style="left:836px;top:499px;width:230px;height:1px;background:#4e4f51"></div>
<div class="a" style="left:836px;top:501px;width:217px;height:216px;background:#6b6c6e;overflow:hidden"><!--LL--></div>
<div class="a" style="left:886px;top:501px;width:65px;height:42px;background:#f4f01a;border-bottom:1px solid #333"></div>
<div class="a" style="left:886px;top:539px;width:65px;height:4px;background:#fff conic-gradient(#ccc 25%,#fff 0 50%,#ccc 0 75%,#fff 0) 0 0/6px 6px;clip-path:polygon(0 60%,50% 100%,100% 60%,100% 100%,0 100%)"></div>
<div class="a" style="left:836px;top:545px;width:217px;height:1px;background:#3e3f41"></div>
<div class="t" style="left:955px;top:529px;font-size:12px;color:#e2e2e2;letter-spacing:-0.74px;">Layer 2 Copy 2</div>
<div class="a" style="left:878px;top:546px;width:175px;height:72px;background:linear-gradient(#7893a6,#6a8497)"></div>
<div class="a" style="left:836px;top:618px;width:217px;height:1px;background:#3e3f41"></div>
<div class="t" style="left:955px;top:559px;font-size:12px;color:#e2e2e2;letter-spacing:-1.17px;">100 % Normal</div>
<div class="t" style="left:955px;top:602px;font-size:12px;color:#e2e2e2;letter-spacing:-0.72px;">Layer 7</div>
<div class="a" style="left:884px;top:548px;width:68px;height:69px;background:#2c3640"></div>
<svg class="a" style="left:886px;top:550px" width="65" height="65" viewBox="0 0 65 65"><defs><pattern id="ck" width="6" height="6" patternUnits="userSpaceOnUse"><rect width="6" height="6" fill="#fff"/><rect width="3" height="3" fill="#ccc"/><rect x="3" y="3" width="3" height="3" fill="#ccc"/></pattern></defs><rect width="65" height="65" fill="url(#ck)"/><rect y="5" width="65" height="55" fill="#f0280a"/><g stroke="#f6a01e" stroke-width="7" stroke-linecap="round"><path d="M40,14 L48,36 M47,13 L48,36 M55,14 L48,36 M60,22 L48,36 M39,28 L48,36 M38,37 L62,35 M38,54 L48,36 M48,54 L48,36 M57,53 L48,36 M60,46 L48,36"/></g><circle cx="48" cy="35" r="7" fill="#f8e628"/></svg>
<div class="a" style="left:836px;top:690.7px;width:217px;height:1px;background:#3e3f41"></div>
<div class="t" style="left:955px;top:631.7px;font-size:12px;color:#e2e2e2;letter-spacing:-1.17px;">100 % Normal</div>
<div class="t" style="left:955px;top:674.7px;font-size:12px;color:#e2e2e2;letter-spacing:-0.95px;">Layer 2 Copy</div>
<svg class="a" style="left:885px;top:622px" width="66" height="66" viewBox="0 0 66 66"><rect width="66" height="66" fill="#333"/><rect x="1" y="1" width="64" height="64" fill="url(#ck)"/><path d="M1,7 Q33,17 65,7 L65,58 Q33,67 1,58Z" fill="#f25a5c"/></svg>
<div class="t" style="left:955px;top:704px;font-size:12px;color:#e2e2e2;letter-spacing:-1.17px;">100 % Normal</div>
<svg class="a" style="left:885px;top:695px" width="66" height="22" viewBox="0 0 66 22"><rect width="66" height="22" fill="#333"/><rect x="1" y="1" width="64" height="21" fill="url(#ck)"/><path d="M31,1 L27,22" stroke="#d66" stroke-width=".7"/></svg>
<div class="a" style="left:839px;top:501px;width:1px;height:216px;background:#3e3f41"></div>
<div class="a" style="left:860px;top:501px;width:1px;height:216px;background:#3e3f41"></div>
<div class="a" style="left:878px;top:501px;width:1px;height:216px;background:#3e3f41"></div>
<svg class="a" style="left:842px;top:574px" width="16" height="12" viewBox="0 0 16 12"><path d="M1,6 Q8,-1 15,6 Q8,12 1,6Z" fill="#eee" stroke="#222" stroke-width=".8"/><circle cx="7" cy="6" r="3" fill="#111"/></svg>
<svg class="a" style="left:862px;top:572px" width="15" height="15" viewBox="0 0 15 15"><path d="M1,13 Q6,12 12,4 L14,2 L13,6 Q8,13 1,13Z" fill="#eee" stroke="#222" stroke-width=".8"/><path d="M11,3 L14,1 L14,4Z" fill="#111"/></svg>
<div class="a" style="left:1053px;top:501px;width:12px;height:216px;background:#5b5c5e;border-left:1px solid #4a4a4a"></div>
<div class="a" style="left:1054px;top:502px;width:10px;height:10px;background:#78797b"></div>
<div class="a" style="left:1054px;top:706px;width:10px;height:10px;background:#78797b"></div>
<div class="a" style="left:1054px;top:541px;width:10px;height:42px;background:#818284;border:1px solid #555"></div>
<svg class="a" style="left:1055px;top:504px" width="8" height="210" viewBox="0 0 8 210"><path d="M0.5,5 L4,1 L7.5,5Z M0.5,205 L4,209 L7.5,205Z" fill="#333"/><path d="M1.5,56h5M1.5,58.5h5M1.5,61h5" stroke="#444" stroke-width="1"/></svg>
<div class="a" style="left:836px;top:717px;width:230px;height:23px;background:#68696b;border-top:1px solid #4a4a4a"></div>
<svg class="a" style="left:838px;top:720px;opacity:1" width="17" height="18" viewBox="0 0 17 18"><g fill="none" stroke="#e8e8e8" stroke-width="1"><path d="M1,3.5 L8.5,1 L16,3.5 L8.5,6Z"/><path d="M1,7 L8.5,4.5 L16,7 L8.5,9.5Z"/><path d="M1,10.5 L8.5,8 L16,10.5 L8.5,13Z"/><path d="M1,14 L8.5,11.5 L16,14 L8.5,16.5Z"/></g></svg>
<svg class="a" style="left:909px;top:721px;opacity:1" width="13" height="15" viewBox="0 0 13 15"><path d="M1,1 L12,1 L12,10 L8,14 L1,14Z" fill="#f4f4f4" stroke="#333" stroke-width=".8"/><path d="M12,10 L8,10 L8,14Z" fill="#888"/></svg>
<svg class="a" style="left:927px;top:721px;opacity:1" width="17" height="16" viewBox="0 0 17 16"><path d="M1,1 L12,1 L12,10 L8,14 L1,14Z" fill="#f4f4f4" stroke="#333" stroke-width=".8"/><path d="M12,10 L8,10 L8,14Z" fill="#888"/><rect x="10" y="10" width="6" height="6" fill="#ccc" stroke="#333" stroke-width=".7"/><path d="M11,13h4M13,11v4" stroke="#333" stroke-width=".8"/></svg>
<svg class="a" style="left:947px;top:721px;opacity:1" width="17" height="16" viewBox="0 0 17 16"><path d="M0.5,1 L10,1 L10,12 L0.5,12Z" fill="#9a9a9a" stroke="#333" stroke-width=".7"/><path d="M7,6 L16,6 L16,12 L13,15.5 L7,15.5Z" fill="#f4f4f4" stroke="#333" stroke-width=".8"/></svg>
<svg class="a" style="left:969px;top:721px;opacity:1" width="12" height="15" viewBox="0 0 12 15"><path d="M6,0.5 L10.5,5 L8,5 L8,9 L4,9 L4,5 L1.5,5Z" fill="#828385" stroke="#5a5b5d" stroke-width=".6"/><path d="M1,10 Q1,14 6,14 Q11,14 11,10" fill="none" stroke="#828385" stroke-width="1.6"/></svg>
<svg class="a" style="left:989px;top:721px;opacity:1" width="12" height="15" viewBox="0 0 12 15"><g transform="translate(0,15) scale(1,-1)"><path d="M6,0.5 L10.5,5 L8,5 L8,9 L4,9 L4,5 L1.5,5Z" fill="#828385" stroke="#5a5b5d" stroke-width=".6"/><path d="M1,10 Q1,14 6,14 Q11,14 11,10" fill="none" stroke="#828385" stroke-width="1.6"/></g></svg>
<svg class="a" style="left:1008px;top:723px;opacity:1" width="15" height="11" viewBox="0 0 15 11"><defs><linearGradient id="mk" x1="0" x2="1"><stop offset="0" stop-color="#fff"/><stop offset="1" stop-color="#222"/></linearGradient></defs><rect x=".5" y=".5" width="14" height="10" fill="url(#mk)" stroke="#333" stroke-width=".7"/><circle cx="6.5" cy="5.5" r="2.6" fill="#fff"/></svg>
<svg class="a" style="left:1028px;top:721px;opacity:1" width="13" height="16" viewBox="0 0 13 16"><path d="M2,1 L2,15" stroke="#7c7d7f" stroke-width="1.4"/><path d="M3,2 L11,5 L3,9Z" fill="#828385"/><circle cx="9" cy="11" r="3" fill="#7c7d7f"/></svg>
<svg class="a" style="left:1048px;top:720px;opacity:1" width="13" height="17" viewBox="0 0 13 17"><path d="M2,5 L11,5 L10,15.5 L3,15.5Z" fill="#f0f0f0" stroke="#333" stroke-width=".8"/><path d="M1,4.5 Q6.5,1.5 12,4.5" fill="none" stroke="#333" stroke-width="1.2"/><path d="M4,2.5 Q6.5,0 9,2.5" fill="none" stroke="#333" stroke-width="1"/><path d="M4.5,7v6.5M6.5,7v6.5M8.5,7v6.5" stroke="#888" stroke-width=".8"/></svg>
<div class="hdr" style="left:1067px;top:90px;width:176px;height:18px;"></div>
<div class="a" style="left:1068px;top:91px;width:18px;height:16px;background:#4a4a4a"></div>
<svg class="a" style="left:1072px;top:95px" width="12" height="10" viewBox="0 0 12 10"><path d="M0,1 L3,4 L0,7Z" fill="#8e8e8e"/><path d="M5,1.5h6M5,4.5h6M5,7.5h6" stroke="#8e8e8e" stroke-width="1.3"/></svg>
<div class="tab" style="left:1087px;top:94px;width:131px;height:15px;"></div>
<svg class="a" style="left:1089px;top:93px" width="24" height="17" viewBox="0 0 24 17"><path d="M4.5,1 L7,9 L6,14 L3,14 L2,9Z" fill="#eee" stroke="#222" stroke-width=".8"/><path d="M1.5,15.5h6" stroke="#111" stroke-width="1.4"/><circle cx="14" cy="9" r="3.2" fill="#1a1a1a"/><path d="M14,4.8v8.4M9.8,9h8.4M11,6l6,6M17,6l-6,6" stroke="#1a1a1a" stroke-width="1.3"/></svg>
<div class="t" style="left:1113px;top:97.5px;font-size:11px;color:#d4d4d4;letter-spacing:-0.57px;">Tool property [Coloring]</div>
<div class="a" style="left:1068px;top:113px;width:163px;height:304px;background:#6b6c6e;border:1px solid #555658;border-top:1px solid #48494b"></div>
<div class="a" style="left:1231px;top:113px;width:11px;height:304px;background:#747577;border:1px solid #58595b"></div>
<div class="t" style="left:1084px;top:120px;font-size:12px;color:#ececec;letter-spacing:-1.30px;">Brush Size</div>
<div class="a" style="left:1132px;top:118px;width:11.4px;height:16px;background:#9a9a9a;border:1px solid #565759"></div>
<div class="a" style="left:1144.9px;top:118px;width:11.4px;height:16px;background:#a4a4a4;border:1px solid #565759"></div>
<div class="a" style="left:1157.8px;top:118px;width:11.4px;height:16px;background:#b0b0b0;border:1px solid #565759"></div>
<div class="a" style="left:1170.7px;top:118px;width:11.4px;height:16px;background:#bcbcbc;border:1px solid #565759"></div>
<div class="a" style="left:1183.6px;top:118px;width:11.4px;height:16px;background:#cacaca;border:1px solid #565759"></div>
<div class="btn" style="left:1197px;top:118px;width:13px;height:16px;"></div>
<svg class="a" style="left:1201px;top:121.5px" width="6" height="9" viewBox="0 0 6 9"><path d="M0,0 L6,4.5 L0,9Z" fill="#333"/></svg>
<div class="btn" style="left:1212px;top:117px;width:14px;height:18px;"></div>
<div class="a" style="left:1215px;top:122px;width:8px;height:8px;border:1.6px solid #f0f0f0;border-radius:2px"></div>
<div class="a" style="left:1078px;top:143px;width:150px;height:1px;background:#77787a"></div>
<div class="a" style="left:1078px;top:142px;width:150px;height:1px;background:#626365"></div>
<div class="t" style="left:1084px;top:151px;font-size:12px;color:#ececec;letter-spacing:-0.92px;">Hardness</div>
<div class="a" style="left:1131px;top:149px;width:14.8px;height:16px;background:#9a9a9a;border:1px solid #565759"></div>
<div class="a" style="left:1147.3px;top:149px;width:14.8px;height:16px;background:#a4a4a4;border:1px solid #565759"></div>
<div class="a" style="left:1163.6px;top:149px;width:14.8px;height:16px;background:#b0b0b0;border:1px solid #565759"></div>
<div class="a" style="left:1179.9px;top:149px;width:14.8px;height:16px;background:#bcbcbc;border:1px solid #565759"></div>
<div class="a" style="left:1196.2px;top:149px;width:14.8px;height:16px;background:#cacaca;border:1px solid #565759"></div>
<div class="btn" style="left:1213px;top:149px;width:13px;height:16px;"></div>
<svg class="a" style="left:1217px;top:152.5px" width="6" height="9" viewBox="0 0 6 9"><path d="M0,0 L6,4.5 L0,9Z" fill="#333"/></svg>
<div class="a" style="left:1078px;top:173px;width:150px;height:1px;background:#77787a"></div>
<div class="a" style="left:1078px;top:172px;width:150px;height:1px;background:#626365"></div>
<div class="t" style="left:1084px;top:179px;font-size:12px;color:#ececec;letter-spacing:-0.82px;">Brush density</div>
<div class="a" style="left:1105px;top:192px;width:49px;height:8px;background:linear-gradient(90deg,#8e8f91,#c4c4c4);border:1px solid #4a4a4c"></div>
<div class="t" style="left:1181px;top:184px;font-size:12px;color:#ececec;letter-spacing:-1.01px;">100</div>
<svg class="a" style="left:1199px;top:183px" width="9" height="14" viewBox="0 0 9 14"><path d="M0,6 L4.5,0.5 L9,6Z M0,8 L4.5,13.5 L9,8Z" fill="#2a2a2a"/></svg>
<div class="btn" style="left:1212px;top:180px;width:14px;height:21px;"></div>
<div class="a" style="left:1215px;top:186.5px;width:8px;height:8px;border:1.6px solid #f0f0f0;border-radius:2px"></div>
<div class="a" style="left:1078px;top:208px;width:150px;height:1px;background:#77787a"></div>
<div class="a" style="left:1078px;top:207px;width:150px;height:1px;background:#626365"></div>
<div class="t" style="left:1084px;top:216px;font-size:12px;color:#ececec;letter-spacing:-0.67px;">Stabilization</div>
<div class="a" style="left:1144px;top:214px;width:12.4px;height:16px;background:#a8a8a8;border:1px solid #565759"></div>
<div class="a" style="left:1157.9px;top:214px;width:12.4px;height:16px;background:#b4b4b4;border:1px solid #565759"></div>
<div class="a" style="left:1171.8px;top:214px;width:12.4px;height:16px;background:#7c7d7f;border:1px solid #565759"></div>
<div class="a" style="left:1185.7px;top:214px;width:12.4px;height:16px;background:#7c7d7f;border:1px solid #565759"></div>
<div class="a" style="left:1199.6px;top:214px;width:12.4px;height:16px;background:#7c7d7f;border:1px solid #565759"></div>
<div class="btn" style="left:1214px;top:214px;width:13px;height:16px;"></div>
<svg class="a" style="left:1218px;top:217.5px" width="6" height="9" viewBox="0 0 6 9"><path d="M0,0 L6,4.5 L0,9Z" fill="#333"/></svg>
<svg class="a" style="left:1204px;top:419px" width="18" height="18" viewBox="0 0 18 18"><circle cx="9" cy="9" r="6" fill="none" stroke="#2a2a2a" stroke-width="2.4" stroke-dasharray="2.6 2.1"/></svg>
<svg class="a" style="left:1226px;top:418px" width="17" height="19" viewBox="0 0 17 19"><path d="M3,1 L3,5.5 Q3,8.5 6.3,9.5 L6,17.5 L11,17.5 L10.7,9.5 Q14,8.5 14,5.5 L14,1 L11.3,1 L11.3,5.5 L5.7,5.5 L5.7,1Z" fill="#f2f2f2" stroke="#2a2a2a" stroke-width=".8"/></svg>
<div class="hdr" style="left:1067px;top:441px;width:176px;height:19px;"></div>
<div class="a" style="left:1068px;top:442px;width:18px;height:17px;background:#4a4a4a"></div>
<svg class="a" style="left:1072px;top:446px" width="12" height="10" viewBox="0 0 12 10"><path d="M0,1 L3,4 L0,7Z" fill="#8e8e8e"/><path d="M5,1.5h6M5,4.5h6M5,7.5h6" stroke="#8e8e8e" stroke-width="1.3"/></svg>
<div class="tab" style="left:1087px;top:443px;width:156px;height:17px;"></div>
<svg class="a" style="left:1089px;top:443px" width="22" height="18" viewBox="0 0 22 18"><path d="M4.5,1 L7,9 L6,14 L3,14 L2,9Z" fill="#eee" stroke="#222" stroke-width=".8"/><path d="M1.5,15.5h6" stroke="#111" stroke-width="1.4"/><path d="M11,3v12M11,3h2.5M11,9h2.5M11,15h2.5" stroke="#ddd" stroke-width="1" fill="none"/><rect x="14" y="1" width="4" height="4" fill="#ddd"/><rect x="14" y="7" width="4" height="4" fill="#ddd"/><rect x="14" y="13" width="4" height="4" fill="#ddd"/></svg>
<div class="a" style="left:1112px;top:446px;width:131px;height:13px;overflow:hidden"><div class="t" style="left:0px;top:1.5px;font-size:11px;color:#d4d4d4;letter-spacing:-0.64px;">Sub Tool [4H Real Pencil Copy 2]</div></div>
<div class="a" style="left:1232px;top:443px;width:11px;height:17px;background:linear-gradient(90deg,rgba(112,113,115,0),#707173)"></div>
<div class="btn" style="left:1069px;top:463.5px;width:56px;height:24px;overflow:hidden"></div>
<svg class="a" style="left:1071px;top:464.5px" width="22" height="22" viewBox="0 0 22 22"><path d="M6,4 L11,2 L17,15 L12,18Z" fill="#eee" stroke="#222" stroke-width=".9"/><path d="M10,13.5 L15,11" stroke="#999"/></svg>
<div class="a" style="left:1093.5px;top:468.5px;width:30.5px;height:15px;overflow:hidden;-webkit-mask-image:linear-gradient(90deg,#000 70%,rgba(0,0,0,.25) 100%);mask-image:linear-gradient(90deg,#000 70%,rgba(0,0,0,.25) 100%)"><div class="t" style="left:0px;top:1px;font-size:12px;color:#ececec;letter-spacing:-0.82px;">Grainy</div></div>
<div class="btn" style="left:1127px;top:463.5px;width:56px;height:24px;background:linear-gradient(#7a8ea0,#6c8093);overflow:hidden"></div>
<div class="a" style="left:1130.5px;top:466.5px;width:18px;height:18px;background:#f4ee1c"></div>
<svg class="a" style="left:1129px;top:464.5px" width="22" height="22" viewBox="0 0 22 22"><path d="M6,3 L10,2 L15,13 L12,15Z" fill="#f2f2f2" stroke="#222" stroke-width=".9"/><path d="M12,15 L15,13 L17,19Z" fill="#111"/><path d="M6,3 L10,2 L11.2,4.6 L7.3,6Z" fill="#666"/></svg>
<div class="a" style="left:1151.5px;top:468.5px;width:30.5px;height:15px;overflow:hidden;-webkit-mask-image:linear-gradient(90deg,#000 70%,rgba(0,0,0,.25) 100%);mask-image:linear-gradient(90deg,#000 70%,rgba(0,0,0,.25) 100%)"><div class="t" style="left:0px;top:1px;font-size:12px;color:#ececec;letter-spacing:-0.78px;">Blendi</div></div>
<div class="btn" style="left:1185px;top:463.5px;width:56px;height:24px;overflow:hidden"></div>
<svg class="a" style="left:1187px;top:464.5px" width="22" height="22" viewBox="0 0 22 22"><path d="M6,3 L10,2 L15,13 L12,15Z" fill="#f2f2f2" stroke="#222" stroke-width=".9"/><path d="M12,15 L15,13 L17,19Z" fill="#111"/><path d="M6,3 L10,2 L11.2,4.6 L7.3,6Z" fill="#666"/></svg>
<div class="a" style="left:1209.5px;top:468.5px;width:30.5px;height:15px;overflow:hidden;-webkit-mask-image:linear-gradient(90deg,#000 70%,rgba(0,0,0,.25) 100%);mask-image:linear-gradient(90deg,#000 70%,rgba(0,0,0,.25) 100%)"><div class="t" style="left:0px;top:1px;font-size:12px;color:#ececec;letter-spacing:-0.87px;">DryBru</div></div>
<div class="btn" style="left:1069px;top:489.5px;width:56px;height:24px;overflow:hidden"></div>
<svg class="a" style="left:1071px;top:490.5px" width="22" height="22" viewBox="0 0 22 22"><path d="M6,3 L10,2 L15,13 L12,15Z" fill="#f2f2f2" stroke="#222" stroke-width=".9"/><path d="M12,15 L15,13 L17,19Z" fill="#111"/><path d="M6,3 L10,2 L11.2,4.6 L7.3,6Z" fill="#666"/></svg>
<div class="a" style="left:1093.5px;top:494.5px;width:30.5px;height:15px;overflow:hidden;-webkit-mask-image:linear-gradient(90deg,#000 70%,rgba(0,0,0,.25) 100%);mask-image:linear-gradient(90deg,#000 70%,rgba(0,0,0,.25) 100%)"><div class="t" style="left:0px;top:1px;font-size:12px;color:#ececec;letter-spacing:-1.01px;">Opaqu</div></div>
<div class="btn" style="left:1127px;top:489.5px;width:56px;height:24px;overflow:hidden"></div>
<svg class="a" style="left:1129px;top:490.5px" width="22" height="22" viewBox="0 0 22 22"><path d="M6,3 L10,2 L15,13 L12,15Z" fill="#f2f2f2" stroke="#222" stroke-width=".9"/><path d="M12,15 L15,13 L17,19Z" fill="#111"/><path d="M6,3 L10,2 L11.2,4.6 L7.3,6Z" fill="#666"/></svg>
<div class="a" style="left:1151.5px;top:494.5px;width:30.5px;height:15px;overflow:hidden;-webkit-mask-image:linear-gradient(90deg,#000 70%,rgba(0,0,0,.25) 100%);mask-image:linear-gradient(90deg,#000 70%,rgba(0,0,0,.25) 100%)"><div class="t" style="left:0px;top:1px;font-size:12px;color:#ececec;letter-spacing:-0.77px;">Pattern</div></div>
<div class="btn" style="left:1185px;top:489.5px;width:56px;height:24px;overflow:hidden"></div>
<div class="a" style="left:1188.5px;top:492.5px;width:18px;height:18px;background:#e01418"></div>
<svg class="a" style="left:1187px;top:490.5px" width="22" height="22" viewBox="0 0 22 22"><path d="M6,3 L10,2 L15,13 L12,15Z" fill="#f2f2f2" stroke="#222" stroke-width=".9"/><path d="M12,15 L15,13 L17,19Z" fill="#111"/><path d="M6,3 L10,2 L11.2,4.6 L7.3,6Z" fill="#666"/></svg>
<div class="a" style="left:1209.5px;top:494.5px;width:30.5px;height:15px;overflow:hidden;-webkit-mask-image:linear-gradient(90deg,#000 70%,rgba(0,0,0,.25) 100%);mask-image:linear-gradient(90deg,#000 70%,rgba(0,0,0,.25) 100%)"><div class="t" style="left:0px;top:1px;font-size:12px;color:#ececec;letter-spacing:-0.86px;">Specia</div></div>
<div class="btn" style="left:1069px;top:515.5px;width:56px;height:24px;overflow:hidden"></div>
<svg class="a" style="left:1071px;top:516.5px" width="22" height="22" viewBox="0 0 22 22"><path d="M3,14 L13,14 L13,19 L3,19Z" fill="#eee" stroke="#222" stroke-width=".8"/><path d="M7,14 L7,9 L11,9 L11,14" fill="#ccc" stroke="#222" stroke-width=".8"/><path d="M12,8 L19,3 M12,10 L20,9" stroke="#eee" stroke-width="1.2"/></svg>
<div class="a" style="left:1093.5px;top:520.5px;width:30.5px;height:15px;overflow:hidden;-webkit-mask-image:linear-gradient(90deg,#000 70%,rgba(0,0,0,.25) 100%);mask-image:linear-gradient(90deg,#000 70%,rgba(0,0,0,.25) 100%)"><div class="t" style="left:0px;top:1px;font-size:12px;color:#ececec;letter-spacing:-0.73px;">Highlig</div></div>
<div class="btn" style="left:1127px;top:515.5px;width:56px;height:24px;overflow:hidden"></div>
<svg class="a" style="left:1129px;top:516.5px" width="22" height="22" viewBox="0 0 22 22"><path d="M19,3 L9,13" stroke="#eee" stroke-width="2.6" stroke-linecap="round"/><path d="M19,3 L9,13" stroke="#222" stroke-width=".6" transform="translate(1,1)"/><path d="M9,12 Q4,13 3,19 Q9,19 11,14Z" fill="#222"/><path d="M2,19 Q8,17 14,19" stroke="#9cc4e0" stroke-width="1.6" fill="none"/></svg>
<div class="a" style="left:1151.5px;top:520.5px;width:30.5px;height:15px;overflow:hidden;-webkit-mask-image:linear-gradient(90deg,#000 70%,rgba(0,0,0,.25) 100%);mask-image:linear-gradient(90deg,#000 70%,rgba(0,0,0,.25) 100%)"><div class="t" style="left:0px;top:1px;font-size:12px;color:#ececec;letter-spacing:-0.72px;">Fair Br</div></div>
<div class="btn" style="left:1185px;top:515.5px;width:56px;height:24px;overflow:hidden"></div>
<svg class="a" style="left:1187px;top:516.5px" width="22" height="22" viewBox="0 0 22 22"><path d="M19,3 L9,13" stroke="#eee" stroke-width="2.6" stroke-linecap="round"/><path d="M19,3 L9,13" stroke="#222" stroke-width=".6" transform="translate(1,1)"/><path d="M9,12 Q4,13 3,19 Q9,19 11,14Z" fill="#222"/><path d="M2,19 Q8,17 14,19" stroke="#9cc4e0" stroke-width="1.6" fill="none"/></svg>
<div class="a" style="left:1209.5px;top:520.5px;width:30.5px;height:15px;overflow:hidden;-webkit-mask-image:linear-gradient(90deg,#000 70%,rgba(0,0,0,.25) 100%);mask-image:linear-gradient(90deg,#000 70%,rgba(0,0,0,.25) 100%)"><div class="t" style="left:0px;top:1px;font-size:12px;color:#ececec;letter-spacing:-0.79px;">Poor br</div></div>
<div class="btn" style="left:1069px;top:541.5px;width:56px;height:24px;overflow:hidden"></div>
<svg class="a" style="left:1071px;top:542.5px" width="22" height="22" viewBox="0 0 22 22"><path d="M19,3 L9,13" stroke="#eee" stroke-width="2.6" stroke-linecap="round"/><path d="M19,3 L9,13" stroke="#222" stroke-width=".6" transform="translate(1,1)"/><path d="M9,12 Q4,13 3,19 Q9,19 11,14Z" fill="#222"/><path d="M2,19 Q8,17 14,19" stroke="#9cc4e0" stroke-width="1.6" fill="none"/></svg>
<div class="a" style="left:1093.5px;top:546.5px;width:30.5px;height:15px;overflow:hidden;-webkit-mask-image:linear-gradient(90deg,#000 70%,rgba(0,0,0,.25) 100%);mask-image:linear-gradient(90deg,#000 70%,rgba(0,0,0,.25) 100%)"><div class="t" style="left:0px;top:1px;font-size:12px;color:#ececec;letter-spacing:-1.03px;">Good</div></div>
<div class="btn" style="left:1127px;top:541.5px;width:56px;height:24px;overflow:hidden"></div>
<svg class="a" style="left:1129px;top:542.5px" width="22" height="22" viewBox="0 0 22 22"><path d="M19,3 L9,13" stroke="#eee" stroke-width="2.6" stroke-linecap="round"/><path d="M19,3 L9,13" stroke="#222" stroke-width=".6" transform="translate(1,1)"/><path d="M9,12 Q4,13 3,19 Q9,19 11,14Z" fill="#222"/><path d="M2,19 Q8,17 14,19" stroke="#9cc4e0" stroke-width="1.6" fill="none"/></svg>
<div class="a" style="left:1151.5px;top:546.5px;width:30.5px;height:15px;overflow:hidden;-webkit-mask-image:linear-gradient(90deg,#000 70%,rgba(0,0,0,.25) 100%);mask-image:linear-gradient(90deg,#000 70%,rgba(0,0,0,.25) 100%)"><div class="t" style="left:0px;top:1px;font-size:12px;color:#ececec;letter-spacing:-0.80px;">Great b</div></div>
<div class="btn" style="left:1185px;top:541.5px;width:56px;height:24px;overflow:hidden"></div>
<svg class="a" style="left:1187px;top:542.5px" width="22" height="22" viewBox="0 0 22 22"><path d="M7,4 Q12,11 11,15 Q10,19 6,19 Q2,18 3,14 Q4,10 7,4Z" fill="#111"/><path d="M15,4 Q20,11 19,15 Q18,19 14,19 Q10,18 11,14 Q12,10 15,4Z" fill="#eee" stroke="#222" stroke-width=".7"/></svg>
<div class="a" style="left:1209.5px;top:546.5px;width:30.5px;height:15px;overflow:hidden;-webkit-mask-image:linear-gradient(90deg,#000 70%,rgba(0,0,0,.25) 100%);mask-image:linear-gradient(90deg,#000 70%,rgba(0,0,0,.25) 100%)"><div class="t" style="left:0px;top:1px;font-size:12px;color:#ececec;letter-spacing:-0.86px;">Pure B</div></div>
<div class="btn" style="left:1069px;top:567.5px;width:56px;height:24px;overflow:hidden"></div>
<svg class="a" style="left:1071px;top:568.5px" width="22" height="22" viewBox="0 0 22 22"><path d="M19,3 L10,12" stroke="#eee" stroke-width="2.6" stroke-linecap="round"/><path d="M10,11 Q5,12 4,17 Q9,17 12,13Z" fill="#222"/><path d="M3,18 Q8,14 13,17 L16,20 L4,21Z" fill="#f0b890" stroke="#a06040" stroke-width=".6"/></svg>
<div class="a" style="left:1093.5px;top:572.5px;width:30.5px;height:15px;overflow:hidden;-webkit-mask-image:linear-gradient(90deg,#000 70%,rgba(0,0,0,.25) 100%);mask-image:linear-gradient(90deg,#000 70%,rgba(0,0,0,.25) 100%)"><div class="t" style="left:0px;top:1px;font-size:12px;color:#ececec;letter-spacing:-0.77px;">Color b</div></div>
<div class="a" style="left:1068px;top:594px;width:162px;height:122px;background:#4e4f51"></div>
<div class="a" style="left:1069px;top:595px;width:160px;height:22.5px;background:linear-gradient(#7f98ab,#6b8598);overflow:hidden"></div>
<svg class="a" style="left:1069px;top:595px" width="160" height="22.5" viewBox="0 0 160 22.5"><path d="M10,15.5 C20,10 30,6.7 42,6.7 C56,6.7 64,14.8 78,14.8 C92,14.8 103,9 113,6" fill="none" stroke="#39505e" stroke-opacity=".85" stroke-width="8.5" stroke-linecap="round"/></svg>
<div class="t" style="left:1189px;top:603px;font-size:12px;color:#f2f2f2;letter-spacing:-0.84px;text-shadow:0 0 2px rgba(60,60,60,.9)">Coloring</div>
<div class="a" style="left:1069px;top:619.5px;width:160px;height:22.5px;background:#6d6e70;overflow:hidden"></div>
<svg class="a" style="left:1069px;top:619.5px" width="160" height="22.5" viewBox="0 0 160 22.5"><path d="M15,12.5 C30,9 45,8.5 58,10" fill="none" stroke="#4a4a4a" stroke-opacity=".3" stroke-width="3"/><path d="M57,5.5 L60,13.5" stroke="#2a2a2a" stroke-opacity=".75" stroke-width="3.5"/></svg>
<div class="a" style="left:1130.5px;top:623.5px;width:98.5px;height:17px;background:linear-gradient(90deg,rgba(109,110,112,0),#6d6e70 6px)"></div>
<div class="t" style="left:1133.5px;top:627.5px;font-size:12px;color:#f2f2f2;letter-spacing:-0.63px;text-shadow:0 0 2px rgba(60,60,60,.9)">dads lighter pencil 4</div>
<div class="a" style="left:1069px;top:644px;width:160px;height:22.5px;background:#6d6e70;overflow:hidden"></div>
<svg class="a" style="left:1069px;top:644px" width="160" height="22.5" viewBox="0 0 160 22.5"><path d="M11,16.5 C22,9 33,5 44,5.5 C54,6 62,9 70,12 L70,15 C60,12 52,9 42,9 C32,9 22,12 11,16.5Z" fill="#1c1c1c"/></svg>
<div class="a" style="left:1139px;top:648px;width:90px;height:17px;background:linear-gradient(90deg,rgba(109,110,112,0),#6d6e70 6px)"></div>
<div class="t" style="left:1142px;top:652px;font-size:12px;color:#f2f2f2;letter-spacing:-0.61px;text-shadow:0 0 2px rgba(60,60,60,.9)">Mechanical pencil</div>
<div class="a" style="left:1069px;top:668px;width:160px;height:22.5px;background:#6d6e70;overflow:hidden"></div>
<svg class="a" style="left:1069px;top:668px" width="160" height="22.5" viewBox="0 0 160 22.5"><path d="M11,17 C22,9 32,3.5 44,3.5 C56,4 66,9 74,12 L74,16.5 C64,13 54,8.5 44,8.5 C34,8.5 22,12.5 11,17Z" fill="#161616"/></svg>
<div class="a" style="left:1140px;top:672px;width:89px;height:17px;background:linear-gradient(90deg,rgba(109,110,112,0),#6d6e70 6px)"></div>
<div class="t" style="left:1143px;top:676px;font-size:12px;color:#f2f2f2;letter-spacing:-0.64px;text-shadow:0 0 2px rgba(60,60,60,.9)">Oil paint flat brush</div>
<div class="a" style="left:1069px;top:692px;width:160px;height:22.5px;background:#6d6e70;overflow:hidden"></div>
<svg class="a" style="left:1069px;top:692px" width="160" height="22.5" viewBox="0 0 160 22.5"><path d="M11,16.5 C22,9 32,3.5 44,4 C58,5 66,13.5 80,13.5 C94,13.5 104,9 113,5 C104,12 94,17.5 80,17.5 C64,17.5 56,8.5 44,8.5 C32,8.5 22,12.5 11,16.5Z" fill="#111"/></svg>
<div class="t" style="left:1189px;top:700px;font-size:12px;color:#f2f2f2;letter-spacing:-0.67px;text-shadow:0 0 2px rgba(60,60,60,.9)">Oil paint</div>
<div class="a" style="left:1230px;top:594px;width:12px;height:122px;background:#747577;border:1px solid #58595b"></div>
<div class="a" style="left:1067px;top:716px;width:176px;height:24px;background:#68696b;border-top:1px solid #505153"></div>
<div class="a" style="left:1067px;top:737px;width:176px;height:3px;background:#505153"></div>
<svg class="a" style="left:1184px;top:720px;opacity:1" width="15" height="17" viewBox="0 0 15 17"><path d="M1,6 L14,6 L14,16 L1,16Z" fill="#e8e8e8" stroke="#333" stroke-width=".8"/><path d="M1,10h13M5.5,6v10M9.5,6v10" stroke="#555" stroke-width=".7"/><path d="M7.5,0.5 L10.5,4 L4.5,4Z" fill="#333"/></svg>
<svg class="a" style="left:1206px;top:721px;opacity:1" width="13" height="15" viewBox="0 0 13 15"><path d="M1,1 L12,1 L12,10 L8,14 L1,14Z" fill="#f4f4f4" stroke="#333" stroke-width=".8"/><path d="M12,10 L8,10 L8,14Z" fill="#888"/></svg>
<svg class="a" style="left:1226px;top:720px;opacity:1" width="13" height="17" viewBox="0 0 13 17"><path d="M2,5 L11,5 L10,15.5 L3,15.5Z" fill="#f0f0f0" stroke="#333" stroke-width=".8"/><path d="M1,4.5 Q6.5,1.5 12,4.5" fill="none" stroke="#333" stroke-width="1.2"/><path d="M4,2.5 Q6.5,0 9,2.5" fill="none" stroke="#333" stroke-width="1"/><path d="M4.5,7v6.5M6.5,7v6.5M8.5,7v6.5" stroke="#888" stroke-width=".8"/></svg>
<div class="a" style="left:1243px;top:90px;width:40px;height:650px;background:#5a5b5d;border-left:1px solid #4e4e50"></div>
<div class="a" style="left:1283px;top:90px;width:17px;height:650px;background:#555658;border-left:1px solid #4c4d4f"></div>
<div class="a" style="left:1246px;top:94px;width:34px;height:34px;background:#737476;border:1px solid #4c4c4e;border-radius:2px;"></div>
<svg class="a" style="left:1249px;top:96px;opacity:1" width="30" height="30" viewBox="0 0 30 30"><path d="M3,10 L8,6 L14,20 L13,24 L9,22Z" fill="#f4f4f4" stroke="#222" stroke-width="1"/><path d="M11,21 L14,26 L13.5,20Z" fill="#111"/><path d="M3,10 L8,6 L9.5,9.5 L4.5,13.5Z" fill="#555"/><circle cx="21" cy="9" r="4.2" fill="none" stroke="#222" stroke-width="3"/><path d="M21,2.5v13M14.5,9h13M16.4,4.4l9.2,9.2M25.6,4.4l-9.2,9.2" stroke="#222" stroke-width="2.2"/><circle cx="21" cy="9" r="2" fill="#737476"/></svg>
<div class="a" style="left:1246px;top:131px;width:34px;height:34px;background:#737476;border:1px solid #4c4c4e;border-radius:2px;"></div>
<svg class="a" style="left:1249px;top:133px;opacity:1" width="30" height="30" viewBox="0 0 30 30"><path d="M3,10 L8,6 L14,20 L13,24 L9,22Z" fill="#f4f4f4" stroke="#222" stroke-width="1"/><path d="M11,21 L14,26 L13.5,20Z" fill="#111"/><path d="M3,10 L8,6 L9.5,9.5 L4.5,13.5Z" fill="#555"/><path d="M17,6v17M17,6h3" stroke="#ddd" stroke-width="1" fill="none"/><rect x="21" y="3" width="5" height="5" fill="#737476" stroke="#e0e0e0"/><rect x="21" y="11" width="5" height="5" fill="#737476" stroke="#e0e0e0"/><rect x="21" y="19" width="5" height="5" fill="#737476" stroke="#e0e0e0"/></svg>
<div class="a" style="left:1246px;top:172px;width:34px;height:38px;background:#737476;border:1px solid #4c4c4e;border-radius:2px;background:#6a6b6d;"></div>
<svg class="a" style="left:1249px;top:176px;opacity:.45" width="30" height="30" viewBox="0 0 30 30"><path d="M3,10 L8,6 L14,20 L13,24 L9,22Z" fill="#f4f4f4" stroke="#222" stroke-width="1"/><path d="M11,21 L14,26 L13.5,20Z" fill="#111"/><path d="M3,10 L8,6 L9.5,9.5 L4.5,13.5Z" fill="#555"/><path d="M17,6v6M17,6h3" stroke="#ddd" stroke-width="1" fill="none"/><circle cx="23.5" cy="6" r="1.6" fill="#222"/><circle cx="23.5" cy="14" r="2.3" fill="#222"/><circle cx="23.5" cy="23" r="3.2" fill="#222"/></svg>
<div class="a" style="left:1246px;top:129px;width:34px;height:2px;background:#4e4e50"></div>
<div class="a" style="left:1246px;top:167px;width:34px;height:3px;background:#4e4e50"></div>
<div class="a" style="left:41px;top:88px;width:414.5px;height:584px;background:#4a4a4c;box-shadow:0 0 2px rgba(0,0,0,.6)"></div>
<div class="a" style="left:42px;top:88px;width:413px;height:20px;background:linear-gradient(#474747,#3a3a3a)"></div>
<div class="t" style="left:219px;top:93px;font-size:9.5px;color:#d0d0d0;letter-spacing:-0.38px;">Sub Tool Detail</div>
<svg class="a" style="left:437px;top:90px" width="14" height="14" viewBox="0 0 14 14"><circle cx="7" cy="7" r="6.5" fill="#2a2a2a"/><path d="M4,4 L10,10 M10,4 L4,10" stroke="#e8e8e8" stroke-width="2"/></svg>
<div class="a" style="left:46px;top:108px;width:404px;height:100px;background:#3c3c3e"></div>
<div class="a" style="left:47px;top:109px;width:201px;height:98px;background:#b9b9b9"></div>
<div class="a" style="left:248px;top:109px;width:201px;height:98px;background:#6e6f71"></div>
<svg class="a" style="left:47px;top:109px" width="402" height="98" viewBox="47 109 402 98"><path d="M87,181 C115,166 140,137 183,137 C235,137 260,178 310,178 C360,178 385,145 412,132" fill="none" stroke="#f2f03a" stroke-opacity=".5" stroke-width="46" stroke-linecap="round"/></svg>
<div class="a" style="left:47px;top:110px;width:43px;height:15px;background:#9e9e9e"></div>
<div class="t" style="left:48px;top:112px;font-size:11.5px;color:#ececec;letter-spacing:-0.60px;">Coloring</div>
<div class="a" style="left:47px;top:209px;width:134px;height:437px;background:#6b6c6e"></div>
<div class="a" style="left:50px;top:230px;width:129px;height:15px;background:linear-gradient(#8199ab,#6f889b)"></div>
<div class="t" style="left:51px;top:213px;font-size:12px;color:#ececec;letter-spacing:-0.80px;">Brush Size</div>
<div class="t" style="left:51px;top:232px;font-size:12px;color:#ececec;letter-spacing:-1.34px;">Ink</div>
<div class="t" style="left:51px;top:251px;font-size:12px;color:#ececec;letter-spacing:-0.72px;">Anti-aliasing</div>
<div class="t" style="left:51px;top:270px;font-size:12px;color:#ececec;letter-spacing:-0.85px;">Brush shape</div>
<div class="t" style="left:57px;top:289px;font-size:12px;color:#ececec;letter-spacing:-0.93px;">Brush tip</div>
<div class="t" style="left:57px;top:308px;font-size:12px;color:#ececec;letter-spacing:-0.66px;">Spraying effect</div>
<div class="t" style="left:57px;top:327px;font-size:12px;color:#ececec;letter-spacing:-0.78px;">Stroke</div>
<div class="t" style="left:57px;top:346px;font-size:12px;color:#ececec;letter-spacing:-0.62px;">Texture</div>
<div class="t" style="left:51px;top:365px;font-size:12px;color:#ececec;letter-spacing:-0.65px;">Border of watercolor</div>
<div class="t" style="left:51px;top:384px;font-size:12px;color:#ececec;letter-spacing:-1.07px;">Erase</div>
<div class="t" style="left:51px;top:403px;font-size:12px;color:#ececec;letter-spacing:-0.74px;">Correction</div>
<div class="t" style="left:51px;top:422px;font-size:12px;color:#ececec;letter-spacing:-0.69px;">Starting and ending</div>
<div class="t" style="left:51px;top:441px;font-size:12px;color:#ececec;letter-spacing:-0.72px;">Anti-overflow</div>
<div class="a" style="left:51px;top:629px;width:13px;height:13px;background:linear-gradient(#7c7d7f,#6a6b6d);border:1px solid #525355;border-radius:2px"></div>
<div class="t" style="left:68px;top:630px;font-size:12px;color:#ececec;letter-spacing:-0.72px;">Show category</div>
<div class="a" style="left:181px;top:209px;width:2px;height:437px;background:#3e3e40"></div>
<div class="a" style="left:183px;top:209px;width:267px;height:437px;background:#6b6c6e"></div>
<div class="t" style="left:187px;top:226px;font-size:12px;color:#ececec;letter-spacing:-0.60px;">Settings for reflecting drawing line to layer.</div>
<div class="a" style="left:182px;top:254px;width:268px;height:249px;border:1px solid #3e3e40;background:#6b6c6e"></div>
<div class="a" style="left:185.5px;top:257.5px;width:12.5px;height:24px;background:linear-gradient(90deg,#77787a,#666769);border:1px solid #555658;border-radius:2px"></div>
<div class="a" style="left:202px;top:257.5px;width:10px;height:24px;background:linear-gradient(90deg,#77787a,#666769);border:1px solid #555658;border-radius:2px"></div>
<svg class="a" style="left:204px;top:264.5px" width="7" height="10" viewBox="0 0 7 10"><path d="M1,1 L6,5 L1,9Z" fill="none" stroke="#f0f0f0" stroke-width="1.1"/></svg>
<div class="t" style="left:228px;top:259px;font-size:12px;color:#ececec;letter-spacing:-0.81px;">Opacity</div>
<div class="a" style="left:249px;top:279px;width:124px;height:1.5px;background:#38383a"></div>
<div class="a" style="left:371.5px;top:276px;width:1.5px;height:4px;background:#38383a"></div>
<div class="a" style="left:249px;top:271.5px;width:54px;height:8.5px;background:linear-gradient(90deg,#8a8b8d,#cacaca);border:1px solid #4a4a4c"></div>
<div class="t" style="left:405px;top:264px;font-size:12px;color:#ececec;letter-spacing:-0.42px;">45</div>
<svg class="a" style="left:419px;top:263px" width="9" height="14" viewBox="0 0 9 14"><path d="M0,6 L4.5,0.5 L9,6Z M0,8 L4.5,13.5 L9,8Z" fill="#2a2a2a"/></svg>
<div class="btn" style="left:431.7px;top:257.5px;width:13.5px;height:24px;"></div>
<div class="a" style="left:434.45px;top:265.5px;width:8px;height:8px;border:1.6px solid #f0f0f0;border-radius:2px"></div>
<div class="a" style="left:184px;top:283.5px;width:264px;height:1px;background:#757678"></div>
<div class="a" style="left:185.5px;top:286px;width:12.5px;height:21px;background:linear-gradient(90deg,#77787a,#666769);border:1px solid #555658;border-radius:2px"></div>
<div class="a" style="left:202px;top:286px;width:10px;height:21px;background:linear-gradient(90deg,#77787a,#666769);border:1px solid #555658;border-radius:2px"></div>
<svg class="a" style="left:204px;top:291.5px" width="7" height="10" viewBox="0 0 7 10"><path d="M1,1 L6,5 L1,9Z" fill="none" stroke="#f0f0f0" stroke-width="1.1"/></svg>
<div class="t" style="left:228px;top:290px;font-size:12px;color:#ececec;letter-spacing:-0.85px;">Blending mode</div>
<div class="btn" style="left:300px;top:286.5px;width:145.5px;height:20px;"></div>
<div class="t" style="left:349.5px;top:290.5px;font-size:12px;color:#ececec;letter-spacing:-0.86px;">Normal</div>
<svg class="a" style="left:434px;top:294px" width="9" height="6" viewBox="0 0 9 6"><path d="M0,0 L9,0 L4.5,5.5Z" fill="#2e2e2e"/></svg>
<div class="a" style="left:184px;top:308.5px;width:264px;height:1px;background:#757678"></div>
<div class="a" style="left:185.5px;top:312px;width:12.5px;height:24px;background:linear-gradient(90deg,#77787a,#666769);border:1px solid #555658;border-radius:2px"></div>
<div class="a" style="left:202px;top:312px;width:10px;height:24px;background:linear-gradient(90deg,#77787a,#666769);border:1px solid #555658;border-radius:2px"></div>
<svg class="a" style="left:204px;top:319px" width="7" height="10" viewBox="0 0 7 10"><path d="M1,1 L6,5 L1,9Z" fill="none" stroke="#f0f0f0" stroke-width="1.1"/></svg>
<div class="a" style="left:229px;top:317px;width:13px;height:13px;background:linear-gradient(#7c7d7f,#6a6b6d);border:1px solid #525355;border-radius:2px"></div>
<div class="t" style="left:246.5px;top:317px;font-size:12px;color:#ececec;letter-spacing:-0.70px;">Mix ground color</div>
<div class="a" style="left:377px;top:312px;width:68.5px;height:22.5px;background:#757678;border:1px solid #626365;border-radius:2px"></div>
<svg class="a" style="left:382px;top:315px" width="44" height="16" viewBox="0 0 44 16"><defs><linearGradient id="mg" x1="0" x2="1"><stop offset="0" stop-color="#707173"/><stop offset="1" stop-color="#d8d8d8"/></linearGradient></defs><path d="M0,0 H15 V16 H0Z" fill="url(#mg)"/><path d="M9,1 h5 v2 h-3 v2 h3 v2 h-3 v2 h3 v2 h-3 v2 h3 v2 h-5Z" fill="#e6e6e6"/><path d="M27,0 H43 V16 H27Z" fill="url(#mg)" opacity=".7"/></svg>
<svg class="a" style="left:435px;top:321px" width="8" height="5" viewBox="0 0 8 5"><path d="M0,0 L8,0 L4,5Z" fill="#58595b"/></svg>
<div class="a" style="left:184px;top:337px;width:264px;height:1px;background:#757678"></div>
<div class="a" style="left:185.5px;top:341px;width:12.5px;height:23px;background:linear-gradient(90deg,#77787a,#666769);border:1px solid #555658;border-radius:2px"></div>
<div class="a" style="left:202px;top:341px;width:10px;height:23px;background:linear-gradient(90deg,#77787a,#666769);border:1px solid #555658;border-radius:2px"></div>
<svg class="a" style="left:204px;top:347.5px" width="7" height="10" viewBox="0 0 7 10"><path d="M1,1 L6,5 L1,9Z" fill="none" stroke="#f0f0f0" stroke-width="1.1"/></svg>
<div class="t" style="left:228px;top:342px;font-size:12px;color:#939496;letter-spacing:-0.70px;">Amount of paint</div>
<div class="a" style="left:249px;top:354px;width:124px;height:9px;border:1px solid #38383a;background:#6b6c6e"></div>
<div class="btn" style="left:432px;top:341px;width:13px;height:22px;opacity:.55"></div>
<div class="a" style="left:434.5px;top:348px;width:8px;height:8px;border:1.6px solid #a0a1a3;border-radius:2px"></div>
<div class="a" style="left:184px;top:366px;width:264px;height:1px;background:#757678"></div>
<div class="a" style="left:185.5px;top:370px;width:12.5px;height:23px;background:linear-gradient(90deg,#77787a,#666769);border:1px solid #555658;border-radius:2px"></div>
<div class="a" style="left:202px;top:370px;width:10px;height:23px;background:linear-gradient(90deg,#77787a,#666769);border:1px solid #555658;border-radius:2px"></div>
<svg class="a" style="left:204px;top:376.5px" width="7" height="10" viewBox="0 0 7 10"><path d="M1,1 L6,5 L1,9Z" fill="none" stroke="#f0f0f0" stroke-width="1.1"/></svg>
<div class="t" style="left:228px;top:371px;font-size:12px;color:#939496;letter-spacing:-0.67px;">Density of paint</div>
<div class="a" style="left:249px;top:383.5px;width:124px;height:9px;border:1px solid #38383a;background:#6b6c6e"></div>
<div class="btn" style="left:432px;top:370px;width:13px;height:22px;opacity:.55"></div>
<div class="a" style="left:434.5px;top:377px;width:8px;height:8px;border:1.6px solid #a0a1a3;border-radius:2px"></div>
<div class="a" style="left:184px;top:395px;width:264px;height:1px;background:#757678"></div>
<div class="a" style="left:185.5px;top:399px;width:12.5px;height:22px;background:linear-gradient(90deg,#77787a,#666769);border:1px solid #555658;border-radius:2px"></div>
<div class="a" style="left:202px;top:399px;width:10px;height:22px;background:linear-gradient(90deg,#77787a,#666769);border:1px solid #555658;border-radius:2px"></div>
<svg class="a" style="left:204px;top:405px" width="7" height="10" viewBox="0 0 7 10"><path d="M1,1 L6,5 L1,9Z" fill="none" stroke="#f0f0f0" stroke-width="1.1"/></svg>
<div class="t" style="left:228px;top:400px;font-size:12px;color:#939496;letter-spacing:-0.77px;">Color stretch</div>
<div class="a" style="left:249px;top:412px;width:124px;height:9px;border:1px solid #38383a;background:#6b6c6e"></div>
<div class="a" style="left:184px;top:424px;width:264px;height:1px;background:#757678"></div>
<div class="a" style="left:185.5px;top:428px;width:12.5px;height:42px;background:linear-gradient(90deg,#77787a,#666769);border:1px solid #555658;border-radius:2px"></div>
<div class="a" style="left:202px;top:428px;width:10px;height:42px;background:linear-gradient(90deg,#77787a,#666769);border:1px solid #555658;border-radius:2px"></div>
<svg class="a" style="left:204px;top:444px" width="7" height="10" viewBox="0 0 7 10"><path d="M1,1 L6,5 L1,9Z" fill="none" stroke="#f0f0f0" stroke-width="1.1"/></svg>
<div class="t" style="left:228px;top:434px;font-size:12px;color:#939496;letter-spacing:-0.67px;">Intensity of blur</div>
<div class="a" style="left:377px;top:428px;width:68.5px;height:22.5px;background:#757678;border:1px solid #626365;border-radius:2px"></div>
<svg class="a" style="left:381px;top:430px" width="46" height="18" viewBox="0 0 46 18"><rect x="2" y="5" width="14" height="11" fill="#8e8f91"/><rect x="4" y="9" width="10" height="5" fill="#a4a5a7"/><path d="M2,2 h14 M2,2 l2,-1.5 M2,2 l2,1.5 M16,2 l-2,-1.5 M16,2 l-2,1.5" stroke="#8a8b8d" stroke-width="1"/><rect x="30" y="1" width="15" height="16" fill="#8a8b8d"/><path d="M33,3 L42,9 L33,15Z" fill="#9c9d9f"/></svg>
<svg class="a" style="left:435px;top:437px" width="8" height="5" viewBox="0 0 8 5"><path d="M0,0 L8,0 L4,5Z" fill="#58595b"/></svg>
<div class="a" style="left:249px;top:459px;width:124px;height:9px;border:1px solid #38383a;background:#6b6c6e"></div>
<div class="btn" style="left:433px;top:457.5px;width:11px;height:11px;opacity:.55"></div>
<div class="a" style="left:435.5px;top:460px;width:6px;height:6px;border:1.3px solid #a0a1a3;border-radius:1.5px"></div>
<div class="a" style="left:184px;top:472.5px;width:264px;height:1px;background:#757678"></div>
<div class="a" style="left:184px;top:473.5px;width:264px;height:28px;background:#707173"></div>
<div class="a" style="left:185.5px;top:476.5px;width:12.5px;height:22px;background:linear-gradient(90deg,#77787a,#666769);border:1px solid #555658;border-radius:2px"></div>
<div class="a" style="left:202px;top:476.5px;width:10px;height:22px;background:linear-gradient(90deg,#77787a,#666769);border:1px solid #555658;border-radius:2px"></div>
<svg class="a" style="left:204px;top:482.5px" width="7" height="10" viewBox="0 0 7 10"><path d="M1,1 L6,5 L1,9Z" fill="none" stroke="#f0f0f0" stroke-width="1.1"/></svg>
<div class="t" style="left:228px;top:478px;font-size:12px;color:#ececec;letter-spacing:-0.64px;">Mixing rate of sub drawing color</div>
<div class="a" style="left:249px;top:490.5px;width:124px;height:8px;border:1px solid #38383a;border-top:none"></div>
<div class="t" style="left:410.5px;top:483px;font-size:12px;color:#ececec;letter-spacing:-0.17px;">0</div>
<svg class="a" style="left:419px;top:483px" width="9" height="14" viewBox="0 0 9 14"><path d="M0,6 L4.5,0.5 L9,6Z M0,8 L4.5,13.5 L9,8Z" fill="#2a2a2a"/></svg>
<div class="btn" style="left:431.7px;top:476.5px;width:13.5px;height:22px;"></div>
<div class="a" style="left:434.45px;top:483.5px;width:8px;height:8px;border:1.6px solid #f0f0f0;border-radius:2px"></div>
<div class="a" style="left:188.5px;top:509.5px;width:25px;height:24px;background:linear-gradient(135deg,#5cc85c,#2c8c2c 60%,#1e7a1e);border:1px solid #2a6a2a;border-radius:2px"></div>
<div class="t" style="left:196px;top:509px;font-family:'Liberation Serif',serif;font-weight:bold;font-size:24px;color:#fff;text-shadow:1px 1px 1px rgba(0,60,0,.6)">i</div>
<div class="t" style="left:217.5px;top:516.5px;font-size:12px;color:#ececec;letter-spacing:-0.80px;">About parameter help</div>
<div class="t" style="left:192px;top:537.5px;font-size:12px;color:#ececec;letter-spacing:-0.65px;">Description of each item is shown if you move cursor o</div>
<div class="t" style="left:192px;top:552px;font-size:12px;color:#ececec;letter-spacing:-0.48px;">ver it.</div>
<div class="btn" style="left:46px;top:646.5px;width:189.5px;height:21.5px;background:linear-gradient(#7b7c7e,#5f6062)"></div>
<div class="btn" style="left:241px;top:646.5px;width:208.5px;height:21.5px;background:linear-gradient(#7b7c7e,#5f6062)"></div>
<svg class="a" style="left:56px;top:648px" width="17" height="17" viewBox="0 0 17 17"><circle cx="8.5" cy="8.5" r="6" fill="none" stroke="#303030" stroke-width="2.4" stroke-dasharray="2.4 2.3"/></svg>
<div class="t" style="left:92px;top:651px;font-size:12px;color:#ececec;letter-spacing:-0.59px;">Reset all settings to default</div>
<div class="t" style="left:261px;top:651px;font-size:12px;color:#ececec;letter-spacing:-0.62px;">Register all settings to initial settings</div>
</div></div>
</body></html>
